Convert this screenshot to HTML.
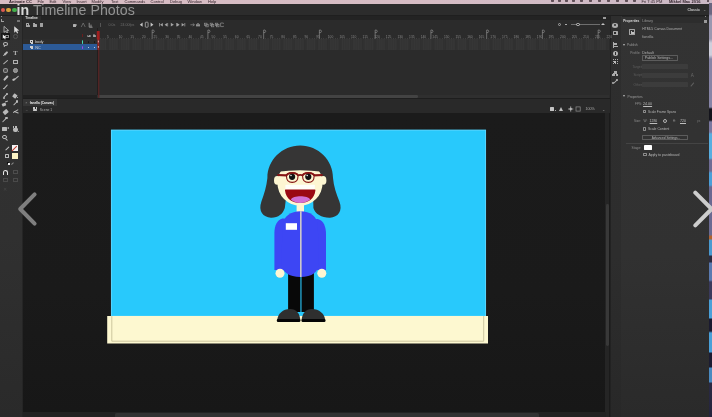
<!DOCTYPE html>
<html lang="en">
<head>
<meta charset="utf-8">
<title>in Timeline Photos</title>
<style>
html,body{margin:0;padding:0;}
body{width:712px;height:417px;overflow:hidden;background:#1b1b1b;font-family:"Liberation Sans",sans-serif;position:relative;}
#root{position:absolute;left:0;top:0;width:712px;height:417px;will-change:transform;}
.i{position:absolute;}
.t{position:absolute;white-space:nowrap;line-height:1;color:#bdbdbd;font-size:4px;}
#cap{left:16.6px;top:2.5px;font-size:14.2px;color:#939393;letter-spacing:0.04px;}
#cap b{color:#d8d8d8;}
</style>
</head>
<body>
<div id="root">
<div class="i" style="left:0.00px;top:0.00px;width:712.00px;height:3.50px;background:linear-gradient(90deg,#d8bcc3 0,#d6bcc4 60%,#cbb9c6 100%);"></div>
<div class="i" style="left:0.00px;top:3.50px;width:709.00px;height:11.10px;background:#2c2c2c;"></div>
<div class="i" style="left:0.00px;top:14.60px;width:709.00px;height:1.00px;background:#1f1f1f;"></div>
<div class="i" style="left:0.00px;top:15.60px;width:23.00px;height:401.40px;background:linear-gradient(#323232 0,#303030 55%,#2a2a2a 100%);"></div>
<div class="i" style="left:23.00px;top:15.60px;width:586.50px;height:82.20px;background:#2b2b2b;"></div>
<div class="i" style="left:23.00px;top:97.80px;width:586.50px;height:1.60px;background:#1e1e1e;"></div>
<div class="i" style="left:23.00px;top:95.40px;width:74.00px;height:2.40px;background:#212121;"></div>
<div class="i" style="left:23.00px;top:99.40px;width:586.50px;height:14.00px;background:#292929;"></div>
<div class="i" style="left:23.00px;top:113.40px;width:582.50px;height:299.20px;background:linear-gradient(#1b1b1b 0,#1a1a1a 60%,#171717 100%);"></div>
<div class="i" style="left:605.20px;top:113.40px;width:4.30px;height:303.60px;background:#252525;"></div>
<div class="i" style="left:606.00px;top:204.00px;width:2.80px;height:141.50px;background:#383838;border-radius:1.4px"></div>
<div class="i" style="left:23.00px;top:412.00px;width:582.50px;height:5.00px;background:#222;"></div>
<div class="i" style="left:115.00px;top:413.00px;width:424.00px;height:4.00px;background:#323232;border-radius:1.6px 1.6px 0 0"></div>
<div class="i" style="left:609.50px;top:15.60px;width:1.00px;height:401.40px;background:#222;"></div>
<div class="i" style="left:610.50px;top:15.60px;width:10.00px;height:401.40px;background:linear-gradient(#2e2e2e 0,#2d2d2d 60%,#282828 100%);"></div>
<div class="i" style="left:620.50px;top:15.60px;width:1.00px;height:401.40px;background:#242424;"></div>
<div class="i" style="left:621.00px;top:15.60px;width:88.00px;height:401.40px;background:linear-gradient(#333 0,#313131 60%,#2a2a2a 100%);"></div>
<div class="i" style="left:708.80px;top:3.20px;width:3.20px;height:413.80px;background:linear-gradient(#6a6680 0px,#6a6680 11px,#9a98b0 13px,#9a98b0 36px,#cfcfdc 40px,#cfcfdc 52px,#8684a6 56px,#8684a6 104px,#14141c 106px,#14141c 117px,#7a78a0 119px,#7a78a0 129px,#58aee0 131px,#58aee0 155px,#6e6c94 157px,#6e6c94 168px,#4a9fd8 170px,#4a9fd8 182px,#6a6890 184px,#6a6a92 232px,#b0622e 233px,#b0622e 236px,#4a9ad0 237px,#4a9ad0 252px,#2a2a40 253px,#2a2a40 259px,#5a7ab0 260px,#5a7ab0 277px,#3a3a5c 279px,#3a3a5c 296px,#4aa0d8 297px,#4aa0d8 315px,#1a1a30 316px,#1a1a30 328px,#4aa0d8 330px,#4aa0d8 349px,#1c1c32 350px,#1c1c32 364px,#4a8ac0 365px,#4a8ac0 379px,#2a2a44 380px,#24243c 414px);"></div>
<div class="i" id="menubar" style="left:0;top:0;width:712px;height:3.5px;overflow:hidden">
<span class="t" style="left:9px;top:0px;font-size:4.05px;color:#2b1d25;font-weight:bold;">Animate CC</span>
<span class="t" style="left:37.5px;top:0px;font-size:4.05px;color:#2b1d25;">File</span>
<span class="t" style="left:49.5px;top:0px;font-size:4.05px;color:#2b1d25;">Edit</span>
<span class="t" style="left:62.5px;top:0px;font-size:4.05px;color:#2b1d25;">View</span>
<span class="t" style="left:76.5px;top:0px;font-size:4.05px;color:#2b1d25;">Insert</span>
<span class="t" style="left:91.5px;top:0px;font-size:4.05px;color:#2b1d25;">Modify</span>
<span class="t" style="left:111px;top:0px;font-size:4.05px;color:#2b1d25;">Text</span>
<span class="t" style="left:124.5px;top:0px;font-size:4.05px;color:#2b1d25;">Commands</span>
<span class="t" style="left:150.5px;top:0px;font-size:4.05px;color:#2b1d25;">Control</span>
<span class="t" style="left:170px;top:0px;font-size:4.05px;color:#2b1d25;">Debug</span>
<span class="t" style="left:187.5px;top:0px;font-size:4.05px;color:#2b1d25;">Window</span>
<span class="t" style="left:208px;top:0px;font-size:4.05px;color:#2b1d25;">Help</span>
<span class="t" style="left:641.5px;top:0px;font-size:4.05px;color:#2b1d25;">Fri 7:45 PM</span>
<span class="t" style="left:669px;top:0px;font-size:4.05px;color:#2b1d25;font-weight:bold;">Mikkel Mac 2016</span>
<div class="i" style="left:551px;top:-0.6px;width:3.4px;height:2.8px;background:#43343c;border-radius:0.8px;opacity:.8"></div>
<div class="i" style="left:558px;top:-0.6px;width:3.4px;height:2.8px;background:#43343c;border-radius:0.8px;opacity:.8"></div>
<div class="i" style="left:565px;top:-0.6px;width:3.4px;height:2.8px;background:#43343c;border-radius:0.8px;opacity:.8"></div>
<div class="i" style="left:572px;top:-0.6px;width:3.4px;height:2.8px;background:#43343c;border-radius:0.8px;opacity:.8"></div>
<div class="i" style="left:580px;top:-0.6px;width:3.4px;height:2.8px;background:#43343c;border-radius:0.8px;opacity:.8"></div>
<div class="i" style="left:589px;top:-0.6px;width:3.4px;height:2.8px;background:#43343c;border-radius:0.8px;opacity:.8"></div>
<div class="i" style="left:598px;top:-0.6px;width:3.4px;height:2.8px;background:#43343c;border-radius:0.8px;opacity:.8"></div>
<div class="i" style="left:607px;top:-0.6px;width:3.4px;height:2.8px;background:#43343c;border-radius:0.8px;opacity:.8"></div>
<div class="i" style="left:616px;top:-0.6px;width:3.4px;height:2.8px;background:#43343c;border-radius:0.8px;opacity:.8"></div>
<div class="i" style="left:625px;top:-0.6px;width:3.4px;height:2.8px;background:#43343c;border-radius:0.8px;opacity:.8"></div>
<div class="i" style="left:633px;top:-0.6px;width:3.4px;height:2.8px;background:#43343c;border-radius:0.8px;opacity:.8"></div>
<div class="i" style="left:706.6px;top:-0.4px;width:2.6px;height:2.6px;background:#43343c;border-radius:50%"></div>
</div>
<div class="i" style="left:0.50px;top:7.60px;width:4.60px;height:4.60px;background:#de5a52;border-radius:50%"></div>
<div class="i" style="left:6.20px;top:7.60px;width:4.60px;height:4.60px;background:#d9a23c;border-radius:50%"></div>
<div class="i" style="left:12.10px;top:7.60px;width:4.60px;height:4.60px;background:#42ad4a;border-radius:50%"></div>
<span class="t" style="left:687.40px;top:9px;font-size:3.6px;color:#c6c6c6;font-weight:bold">Classic</span>
<span class="t" style="left:702.60px;top:8px;font-size:4px;color:#9a9a9a;">&#8964;</span>
<div class="i" style="left:22.40px;top:15.60px;width:0.80px;height:401.40px;background:#252525;"></div>
<div class="i" style="left:0.60px;top:16.20px;width:1.40px;height:0.70px;background:#9a9a9a;"></div>
<div class="i" style="left:1.40px;top:21.00px;width:3.00px;height:0.70px;background:#a0a0a0;"></div>
<div class="i" style="left:1.40px;top:19.20px;width:0.70px;height:1.80px;background:#a0a0a0;"></div>
<div class="i" style="left:17.40px;top:20.20px;width:2.60px;height:0.60px;background:#777;"></div>
<div class="i" style="left:17.40px;top:21.20px;width:2.60px;height:0.60px;background:#777;"></div>
<svg class="i" style="left:0.8px;top:15.6px" width="23" height="30" viewBox="0 0 23 30">
<path d="M3 10.4 L3 16.4 L4.6 15 L5.8 17.4 L6.8 16.9 L5.7 14.6 L7.6 14.4 Z" fill="none" stroke="#cfcfcf" stroke-width="0.7"/>
<path d="M13.2 10.2 L13.2 16.8 L14.9 15.2 L16.1 17.6 L17.2 17.1 L16.1 14.8 L18.2 14.6 Z" fill="#d6d6d6"/>
</svg>
<div class="i" style="left:1.40px;top:33.20px;width:8.20px;height:6.80px;background:#161616;border-radius:0.6px"></div>
<div class="i" style="left:4.60px;top:34.60px;width:4.00px;height:3.80px;border:0.6px solid #8a8a8a;box-sizing:border-box;"></div>
<svg class="i" style="left:0;top:15px" width="23" height="30" viewBox="0 0 23 30"><path d="M2.8 19.4 L2.8 23.8 L4 22.8 L4.9 24.4 L5.7 24 L4.9 22.5 L6.3 22.3 Z" fill="#f0f0f0"/></svg>
<div class="i" style="left:13.00px;top:34.10px;width:4.80px;height:4.80px;border:0.8px solid #555;box-sizing:border-box;border-radius:50%"></div>
<div class="i" style="left:2.80px;top:41.80px;width:5.20px;height:3.80px;border:0.9px solid #bababa;box-sizing:border-box;border-radius:50%"></div>
<div class="i" style="left:3.60px;top:45.20px;width:0.8px;height:2.2px;background:#bababa;transform:rotate(30deg);border-radius:0.4px;"></div>
<div class="i" style="left:4.55px;top:50.90px;width:2.1px;height:4.6px;background:#bababa;transform:rotate(45deg);border-radius:1.05px;"></div>
<div class="i" style="left:2.60px;top:54.70px;width:1.30px;height:1.30px;background:#bababa;border-radius:50%"></div>
<span class="t" style="left:13.30px;top:50px;font-size:6.4px;color:#bababa;font-weight:bold;font-family:'Liberation Serif',serif">T</span>
<div class="i" style="left:5.00px;top:58.50px;width:0.8px;height:6.4px;background:#b0b0b0;transform:rotate(50deg);border-radius:0.4px;"></div>
<div class="i" style="left:12.90px;top:60.00px;width:5.00px;height:4.20px;border:0.7px solid #b0b0b0;box-sizing:border-box;background:#3a3a3a"></div>
<div class="i" style="left:2.60px;top:68.20px;width:5.60px;height:4.60px;border:0.8px solid #9a9a9a;box-sizing:border-box;border-radius:50%;background:#4c4c4c"></div>
<div class="i" style="left:13.00px;top:67.90px;width:4.80px;height:4.80px;border:0.7px solid #a8a8a8;box-sizing:border-box;border-radius:50%;background:#8a8a8a"></div>
<div class="i" style="left:4.55px;top:75.40px;width:1.7px;height:5.8px;background:#bababa;transform:rotate(42deg);border-radius:0.85px;"></div>
<div class="i" style="left:15.50px;top:75.20px;width:1px;height:5.6px;background:#bababa;transform:rotate(50deg);border-radius:0.5px;"></div>
<div class="i" style="left:13.20px;top:78.20px;width:1.6px;height:2.8px;background:#bababa;transform:rotate(60deg);border-radius:0.8px;"></div>
<div class="i" style="left:5.00px;top:83.60px;width:1.2px;height:6px;background:#bababa;transform:rotate(42deg);border-radius:0.6px;"></div>
<div class="i" style="left:2.80px;top:87.80px;width:1.60px;height:1.60px;background:#bababa;border-radius:50%"></div>
<div class="i" style="left:4.90px;top:93.30px;width:1px;height:5px;background:#bababa;transform:rotate(45deg);border-radius:0.5px;"></div>
<div class="i" style="left:2.60px;top:96.60px;width:2.20px;height:2.20px;background:#bababa;border-radius:50%"></div>
<div class="i" style="left:6.40px;top:92.80px;width:1.80px;height:1.80px;background:#bababa;border-radius:50%"></div>
<div class="i" style="left:13.20px;top:94.40px;width:4.00px;height:3.60px;background:#bababa;border-radius:0.6px;transform:rotate(35deg)"></div>
<div class="i" style="left:17.00px;top:96.60px;width:1.30px;height:1.80px;background:#bababa;border-radius:50%"></div>
<div class="i" style="left:2.40px;top:102.80px;width:4.40px;height:3.40px;background:#bababa;border-radius:0.6px;transform:rotate(-20deg)"></div>
<div class="i" style="left:5.00px;top:101.00px;width:3.00px;height:1.20px;background:#bababa;transform:rotate(-20deg)"></div>
<div class="i" style="left:14.85px;top:100.40px;width:1.1px;height:6.4px;background:#bababa;transform:rotate(45deg);border-radius:0.55px;"></div>
<div class="i" style="left:16.20px;top:100.40px;width:2.20px;height:2.20px;background:#bababa;border-radius:50%"></div>
<div class="i" style="left:2.60px;top:109.70px;width:5.20px;height:3.60px;background:#bababa;border-radius:0.6px;transform:rotate(-40deg)"></div>
<div class="i" style="left:14.95px;top:108.30px;width:0.9px;height:6.4px;background:#bababa;transform:rotate(60deg);border-radius:0.45px;"></div>
<div class="i" style="left:15.75px;top:109.60px;width:0.9px;height:4.6px;background:#bababa;transform:rotate(110deg);border-radius:0.45px;"></div>
<div class="i" style="left:4.20px;top:116.60px;width:1.2px;height:6.2px;background:#bababa;transform:rotate(45deg);border-radius:0.6px;"></div>
<div class="i" style="left:5.00px;top:116.90px;width:2.60px;height:2.60px;background:#bababa;border-radius:50%"></div>
<div class="i" style="left:2.00px;top:127.00px;width:4.60px;height:4.00px;background:#bababa;border-radius:0.5px"></div>
<div class="i" style="left:6.6px;top:127.4px;width:0;height:0;border-right:2.2px solid #bababa;border-top:1.6px solid transparent;border-bottom:1.6px solid transparent"></div>
<div class="i" style="left:13.00px;top:127.80px;width:4.80px;height:4.00px;background:#bababa;border-radius:1.2px 1.2px 2px 2px"></div>
<div class="i" style="left:13.20px;top:126.00px;width:1.00px;height:2.40px;background:#bababa;"></div>
<div class="i" style="left:14.60px;top:125.60px;width:1.00px;height:2.60px;background:#bababa;"></div>
<div class="i" style="left:16.00px;top:126.00px;width:1.00px;height:2.40px;background:#bababa;"></div>
<div class="i" style="left:18.40px;top:131.00px;width:1.00px;height:1.00px;background:#999;"></div>
<div class="i" style="left:2.00px;top:134.60px;width:4.60px;height:4.60px;border:0.9px solid #bababa;box-sizing:border-box;border-radius:50%"></div>
<div class="i" style="left:6.30px;top:137.90px;width:1px;height:3px;background:#bababa;transform:rotate(-45deg);border-radius:0.5px;"></div>
<div class="i" style="left:6.95px;top:145.70px;width:0.9px;height:4.6px;background:#bdbdbd;transform:rotate(45deg);border-radius:0.45px;"></div>
<div class="i" style="left:11.80px;top:145.10px;width:5.80px;height:5.80px;background:#f4f4f4;"></div>
<div class="i" style="left:14.35px;top:144.70px;width:0.7px;height:6.6px;background:#c0392b;transform:rotate(45deg);border-radius:0.35px;"></div>
<div class="i" style="left:5.00px;top:154.00px;width:3.60px;height:3.60px;background:#bdbdbd;border-radius:0.6px"></div>
<div class="i" style="left:6.00px;top:155.00px;width:1.60px;height:1.60px;background:#323232;"></div>
<div class="i" style="left:11.80px;top:153.00px;width:5.80px;height:6.00px;background:#fcf3c4;"></div>
<div class="i" style="left:6.80px;top:162.10px;width:1.80px;height:1.80px;background:#111;"></div>
<div class="i" style="left:7.80px;top:163.10px;width:1.80px;height:1.80px;background:#eee;"></div>
<div class="i" style="left:11.65px;top:162.00px;width:0.7px;height:3px;background:#8a8a8a;transform:rotate(45deg);border-radius:0.35px;"></div>
<div class="i" style="left:2.60px;top:169.60px;width:5.20px;height:5.40px;border:1.3px solid #e6e6e6;box-sizing:border-box;border-bottom:none;border-radius:2.6px 2.6px 0 0"></div>
<div class="i" style="left:13.00px;top:169.80px;width:4.80px;height:4.40px;border:0.7px solid #4d4d4d;box-sizing:border-box;"></div>
<div class="i" style="left:2.80px;top:177.80px;width:4.80px;height:4.40px;border:0.7px solid #4a4a4a;box-sizing:border-box;"></div>
<div class="i" style="left:13.00px;top:177.80px;width:4.80px;height:4.40px;border:0.7px solid #4a4a4a;box-sizing:border-box;"></div>
<span class="t" style="left:3.00px;top:188px;font-size:4.6px;color:#474747;">&#10005;</span>
<div class="i" style="left:23.00px;top:15.60px;width:586.50px;height:4.20px;background:#232323;"></div>
<div class="i" style="left:23.00px;top:15.90px;width:17.50px;height:3.90px;background:#2c2c2c;"></div>
<span class="t" style="left:25.20px;top:17px;font-size:3.1px;color:#e6e6e6;font-weight:bold">Timeline</span>
<div class="i" style="left:603.00px;top:16.60px;width:3.00px;height:0.60px;background:#999;"></div>
<div class="i" style="left:603.00px;top:17.80px;width:3.00px;height:0.60px;background:#999;"></div>
<div class="i" style="left:25.80px;top:23.20px;width:3.60px;height:3.60px;border:0.8px solid #a9a9a9;box-sizing:border-box;border-radius:0.5px"></div>
<div class="i" style="left:27.20px;top:24.60px;width:2.60px;height:2.60px;background:#a9a9a9;border-radius:0.4px"></div>
<div class="i" style="left:32.80px;top:23.60px;width:4.20px;height:3.20px;background:#a9a9a9;border-radius:0.5px"></div>
<div class="i" style="left:32.80px;top:23.00px;width:1.80px;height:1.00px;background:#a9a9a9;"></div>
<div class="i" style="left:40.00px;top:23.80px;width:3.00px;height:3.20px;background:#a0a0a0;border-radius:0 0 0.6px 0.6px"></div>
<div class="i" style="left:39.60px;top:23.00px;width:3.80px;height:0.60px;background:#a0a0a0;"></div>
<div class="i" style="left:72.60px;top:23.60px;width:3.60px;height:3.00px;background:#b0b0b0;border-radius:0.5px"></div>
<div class="i" style="left:76.2px;top:24px;width:0;height:0;border-right:1.8px solid #b0b0b0;border-top:1.2px solid transparent;border-bottom:1.2px solid transparent"></div>
<svg class="i" style="left:80px;top:22px" width="16" height="7" viewBox="0 0 16 7"><path d="M1.2 5 L3.2 1 L5.2 5" fill="none" stroke="#7d7d7d" stroke-width="0.7"/><path d="M9.2 0.8 V5.2 H12.6 M11 2.6 V5.2" fill="none" stroke="#a8a8a8" stroke-width="0.8"/></svg>
<div class="i" style="left:100.00px;top:23.00px;width:0.80px;height:4.00px;background:#555;"></div>
<span class="t" style="left:108.40px;top:24px;font-size:3.6px;color:#6e6e6e;">0.0s</span>
<span class="t" style="left:120.60px;top:24px;font-size:3.6px;color:#6e6e6e;">24.00fps</span>
<div class="i" style="left:81.80px;top:34.00px;width:1.10px;height:2.60px;background:#6a1c1c;"></div>
<div class="i" style="left:86.60px;top:34.60px;width:4.00px;height:2.40px;background:#9c9c9c;border-radius:50%"></div>
<div class="i" style="left:88.00px;top:35.20px;width:1.20px;height:1.20px;background:#2b2b2b;border-radius:50%"></div>
<div class="i" style="left:92.80px;top:35.20px;width:2.80px;height:2.20px;background:#9c9c9c;border-radius:0.4px"></div>
<div class="i" style="left:93.30px;top:33.60px;width:1.80px;height:2.40px;border:0.6px solid #9c9c9c;box-sizing:border-box;border-radius:1px 1px 0 0"></div>
<div class="i" style="left:23.00px;top:39.20px;width:74.00px;height:5.20px;background:#2d2d2d;"></div>
<div class="i" style="left:23.00px;top:44.40px;width:74.00px;height:5.50px;background:#2c5a97;"></div>
<div class="i" style="left:30.00px;top:40.30px;width:2.60px;height:2.60px;border:0.6px solid #cfcfcf;box-sizing:border-box;"></div>
<div class="i" style="left:31.30px;top:41.80px;width:2.20px;height:1.90px;background:#cfcfcf;"></div>
<span class="t" style="left:35.20px;top:41px;font-size:3.8px;color:#d8d8d8;">body</span>
<div class="i" style="left:82.10px;top:40.20px;width:1.30px;height:3.60px;background:#46dcb4;border-radius:0.4px"></div>
<div class="i" style="left:88.00px;top:41.40px;width:1.20px;height:1.20px;background:#161616;border-radius:50%"></div>
<div class="i" style="left:93.70px;top:41.40px;width:1.20px;height:1.20px;background:#161616;border-radius:50%"></div>
<div class="i" style="left:30.00px;top:45.60px;width:2.60px;height:2.60px;border:0.6px solid #cfcfcf;box-sizing:border-box;"></div>
<div class="i" style="left:31.30px;top:47.10px;width:2.20px;height:1.90px;background:#cfcfcf;"></div>
<span class="t" style="left:35.20px;top:47px;font-size:3.8px;color:#d8d8d8;">NC</span>
<div class="i" style="left:82.10px;top:45.50px;width:1.30px;height:3.60px;background:#a546e8;border-radius:0.4px"></div>
<div class="i" style="left:88.00px;top:46.70px;width:1.20px;height:1.20px;background:#f0f0f0;border-radius:50%"></div>
<div class="i" style="left:93.70px;top:46.70px;width:1.20px;height:1.20px;background:#f0f0f0;border-radius:50%"></div>
<div class="i" style="left:97.00px;top:28.00px;width:0.90px;height:70.00px;background:#221e1e;"></div>
<div class="i" style="left:97.30px;top:39.40px;width:511.70px;height:10.40px;background:#363636;"></div>
<div class="i" style="left:97.30px;top:94.60px;width:512.00px;height:3.20px;background:#2f2f2f;"></div>
<div class="i" style="left:98.00px;top:95.00px;width:320.00px;height:2.80px;background:#434343;border-radius:1.3px"></div>
<div class="i" style="left:571.00px;top:24.40px;width:28.60px;height:0.60px;background:#6e6e6e;"></div>
<div class="i" style="left:576.40px;top:23.00px;width:3.20px;height:3.20px;border:0.7px solid #c9c9c9;box-sizing:border-box;border-radius:50%;background:#2b2b2b"></div>
<div class="i" style="left:565.00px;top:24.30px;width:2.00px;height:0.80px;background:#aaa;"></div>
<div class="i" style="left:601.4px;top:23.2px;width:0;height:0;border-left:2px solid transparent;border-right:2px solid transparent;border-bottom:2.4px solid #c4c4c4"></div>
<div class="i" style="left:557.60px;top:22.80px;width:3.20px;height:3.20px;border:0.7px solid #a5a5a5;box-sizing:border-box;border-radius:50%"></div>
<svg class="i" style="left:0;top:0" width="712" height="100" viewBox="0 0 712 100"><rect x="106.59" y="39.4" width="2.32" height="10.4" fill="#313131"/><rect x="118.21" y="39.4" width="2.32" height="10.4" fill="#313131"/><rect x="129.82" y="39.4" width="2.32" height="10.4" fill="#313131"/><rect x="141.44" y="39.4" width="2.32" height="10.4" fill="#313131"/><rect x="153.05" y="39.4" width="2.32" height="10.4" fill="#313131"/><rect x="164.66" y="39.4" width="2.32" height="10.4" fill="#313131"/><rect x="176.28" y="39.4" width="2.32" height="10.4" fill="#313131"/><rect x="187.89" y="39.4" width="2.32" height="10.4" fill="#313131"/><rect x="199.51" y="39.4" width="2.32" height="10.4" fill="#313131"/><rect x="211.12" y="39.4" width="2.32" height="10.4" fill="#313131"/><rect x="222.74" y="39.4" width="2.32" height="10.4" fill="#313131"/><rect x="234.35" y="39.4" width="2.32" height="10.4" fill="#313131"/><rect x="245.97" y="39.4" width="2.32" height="10.4" fill="#313131"/><rect x="257.58" y="39.4" width="2.32" height="10.4" fill="#313131"/><rect x="269.20" y="39.4" width="2.32" height="10.4" fill="#313131"/><rect x="280.81" y="39.4" width="2.32" height="10.4" fill="#313131"/><rect x="292.43" y="39.4" width="2.32" height="10.4" fill="#313131"/><rect x="304.04" y="39.4" width="2.32" height="10.4" fill="#313131"/><rect x="315.65" y="39.4" width="2.32" height="10.4" fill="#313131"/><rect x="327.27" y="39.4" width="2.32" height="10.4" fill="#313131"/><rect x="338.88" y="39.4" width="2.32" height="10.4" fill="#313131"/><rect x="350.50" y="39.4" width="2.32" height="10.4" fill="#313131"/><rect x="362.11" y="39.4" width="2.32" height="10.4" fill="#313131"/><rect x="373.73" y="39.4" width="2.32" height="10.4" fill="#313131"/><rect x="385.34" y="39.4" width="2.32" height="10.4" fill="#313131"/><rect x="396.96" y="39.4" width="2.32" height="10.4" fill="#313131"/><rect x="408.57" y="39.4" width="2.32" height="10.4" fill="#313131"/><rect x="420.19" y="39.4" width="2.32" height="10.4" fill="#313131"/><rect x="431.80" y="39.4" width="2.32" height="10.4" fill="#313131"/><rect x="443.41" y="39.4" width="2.32" height="10.4" fill="#313131"/><rect x="455.03" y="39.4" width="2.32" height="10.4" fill="#313131"/><rect x="466.64" y="39.4" width="2.32" height="10.4" fill="#313131"/><rect x="478.26" y="39.4" width="2.32" height="10.4" fill="#313131"/><rect x="489.87" y="39.4" width="2.32" height="10.4" fill="#313131"/><rect x="501.49" y="39.4" width="2.32" height="10.4" fill="#313131"/><rect x="513.10" y="39.4" width="2.32" height="10.4" fill="#313131"/><rect x="524.72" y="39.4" width="2.32" height="10.4" fill="#313131"/><rect x="536.33" y="39.4" width="2.32" height="10.4" fill="#313131"/><rect x="547.95" y="39.4" width="2.32" height="10.4" fill="#313131"/><rect x="559.56" y="39.4" width="2.32" height="10.4" fill="#313131"/><rect x="571.17" y="39.4" width="2.32" height="10.4" fill="#313131"/><rect x="582.79" y="39.4" width="2.32" height="10.4" fill="#313131"/><rect x="594.40" y="39.4" width="2.32" height="10.4" fill="#313131"/><rect x="606.02" y="39.4" width="2.32" height="10.4" fill="#313131"/><line x1="99.62" y1="39.4" x2="99.62" y2="49.8" stroke="#2d2d2d" stroke-width="0.35"/><rect x="98.16" y="38" width="0.6" height="0.7" fill="#5e5e5e"/><line x1="101.95" y1="39.4" x2="101.95" y2="49.8" stroke="#2d2d2d" stroke-width="0.35"/><rect x="100.48" y="38" width="0.6" height="0.7" fill="#5e5e5e"/><line x1="104.27" y1="39.4" x2="104.27" y2="49.8" stroke="#2d2d2d" stroke-width="0.35"/><rect x="102.81" y="38" width="0.6" height="0.7" fill="#5e5e5e"/><line x1="106.59" y1="39.4" x2="106.59" y2="49.8" stroke="#2d2d2d" stroke-width="0.35"/><rect x="105.13" y="38" width="0.6" height="0.7" fill="#5e5e5e"/><line x1="108.91" y1="39.4" x2="108.91" y2="49.8" stroke="#2d2d2d" stroke-width="0.35"/><rect x="107.45" y="38" width="0.6" height="0.7" fill="#5e5e5e"/><line x1="111.24" y1="39.4" x2="111.24" y2="49.8" stroke="#2d2d2d" stroke-width="0.35"/><rect x="109.78" y="38" width="0.6" height="0.7" fill="#5e5e5e"/><line x1="113.56" y1="39.4" x2="113.56" y2="49.8" stroke="#2d2d2d" stroke-width="0.35"/><rect x="112.10" y="38" width="0.6" height="0.7" fill="#5e5e5e"/><line x1="115.88" y1="39.4" x2="115.88" y2="49.8" stroke="#2d2d2d" stroke-width="0.35"/><rect x="114.42" y="38" width="0.6" height="0.7" fill="#5e5e5e"/><line x1="118.21" y1="39.4" x2="118.21" y2="49.8" stroke="#2d2d2d" stroke-width="0.35"/><rect x="116.74" y="38" width="0.6" height="0.7" fill="#5e5e5e"/><line x1="120.53" y1="39.4" x2="120.53" y2="49.8" stroke="#2d2d2d" stroke-width="0.35"/><rect x="119.07" y="38" width="0.6" height="0.7" fill="#5e5e5e"/><line x1="122.85" y1="39.4" x2="122.85" y2="49.8" stroke="#2d2d2d" stroke-width="0.35"/><rect x="121.39" y="38" width="0.6" height="0.7" fill="#5e5e5e"/><line x1="125.17" y1="39.4" x2="125.17" y2="49.8" stroke="#2d2d2d" stroke-width="0.35"/><rect x="123.71" y="38" width="0.6" height="0.7" fill="#5e5e5e"/><line x1="127.50" y1="39.4" x2="127.50" y2="49.8" stroke="#2d2d2d" stroke-width="0.35"/><rect x="126.04" y="38" width="0.6" height="0.7" fill="#5e5e5e"/><line x1="129.82" y1="39.4" x2="129.82" y2="49.8" stroke="#2d2d2d" stroke-width="0.35"/><rect x="128.36" y="38" width="0.6" height="0.7" fill="#5e5e5e"/><line x1="132.14" y1="39.4" x2="132.14" y2="49.8" stroke="#2d2d2d" stroke-width="0.35"/><rect x="130.68" y="38" width="0.6" height="0.7" fill="#5e5e5e"/><line x1="134.47" y1="39.4" x2="134.47" y2="49.8" stroke="#2d2d2d" stroke-width="0.35"/><rect x="133.01" y="38" width="0.6" height="0.7" fill="#5e5e5e"/><line x1="136.79" y1="39.4" x2="136.79" y2="49.8" stroke="#2d2d2d" stroke-width="0.35"/><rect x="135.33" y="38" width="0.6" height="0.7" fill="#5e5e5e"/><line x1="139.11" y1="39.4" x2="139.11" y2="49.8" stroke="#2d2d2d" stroke-width="0.35"/><rect x="137.65" y="38" width="0.6" height="0.7" fill="#5e5e5e"/><line x1="141.44" y1="39.4" x2="141.44" y2="49.8" stroke="#2d2d2d" stroke-width="0.35"/><rect x="139.97" y="38" width="0.6" height="0.7" fill="#5e5e5e"/><line x1="143.76" y1="39.4" x2="143.76" y2="49.8" stroke="#2d2d2d" stroke-width="0.35"/><rect x="142.30" y="38" width="0.6" height="0.7" fill="#5e5e5e"/><line x1="146.08" y1="39.4" x2="146.08" y2="49.8" stroke="#2d2d2d" stroke-width="0.35"/><rect x="144.62" y="38" width="0.6" height="0.7" fill="#5e5e5e"/><line x1="148.40" y1="39.4" x2="148.40" y2="49.8" stroke="#2d2d2d" stroke-width="0.35"/><rect x="146.94" y="38" width="0.6" height="0.7" fill="#5e5e5e"/><line x1="150.73" y1="39.4" x2="150.73" y2="49.8" stroke="#2d2d2d" stroke-width="0.35"/><rect x="149.27" y="38" width="0.6" height="0.7" fill="#5e5e5e"/><line x1="153.05" y1="39.4" x2="153.05" y2="49.8" stroke="#2d2d2d" stroke-width="0.35"/><rect x="151.59" y="38" width="0.6" height="0.7" fill="#5e5e5e"/><line x1="155.37" y1="39.4" x2="155.37" y2="49.8" stroke="#2d2d2d" stroke-width="0.35"/><rect x="153.91" y="38" width="0.6" height="0.7" fill="#5e5e5e"/><line x1="157.70" y1="39.4" x2="157.70" y2="49.8" stroke="#2d2d2d" stroke-width="0.35"/><rect x="156.23" y="38" width="0.6" height="0.7" fill="#5e5e5e"/><line x1="160.02" y1="39.4" x2="160.02" y2="49.8" stroke="#2d2d2d" stroke-width="0.35"/><rect x="158.56" y="38" width="0.6" height="0.7" fill="#5e5e5e"/><line x1="162.34" y1="39.4" x2="162.34" y2="49.8" stroke="#2d2d2d" stroke-width="0.35"/><rect x="160.88" y="38" width="0.6" height="0.7" fill="#5e5e5e"/><line x1="164.66" y1="39.4" x2="164.66" y2="49.8" stroke="#2d2d2d" stroke-width="0.35"/><rect x="163.20" y="38" width="0.6" height="0.7" fill="#5e5e5e"/><line x1="166.99" y1="39.4" x2="166.99" y2="49.8" stroke="#2d2d2d" stroke-width="0.35"/><rect x="165.53" y="38" width="0.6" height="0.7" fill="#5e5e5e"/><line x1="169.31" y1="39.4" x2="169.31" y2="49.8" stroke="#2d2d2d" stroke-width="0.35"/><rect x="167.85" y="38" width="0.6" height="0.7" fill="#5e5e5e"/><line x1="171.63" y1="39.4" x2="171.63" y2="49.8" stroke="#2d2d2d" stroke-width="0.35"/><rect x="170.17" y="38" width="0.6" height="0.7" fill="#5e5e5e"/><line x1="173.96" y1="39.4" x2="173.96" y2="49.8" stroke="#2d2d2d" stroke-width="0.35"/><rect x="172.49" y="38" width="0.6" height="0.7" fill="#5e5e5e"/><line x1="176.28" y1="39.4" x2="176.28" y2="49.8" stroke="#2d2d2d" stroke-width="0.35"/><rect x="174.82" y="38" width="0.6" height="0.7" fill="#5e5e5e"/><line x1="178.60" y1="39.4" x2="178.60" y2="49.8" stroke="#2d2d2d" stroke-width="0.35"/><rect x="177.14" y="38" width="0.6" height="0.7" fill="#5e5e5e"/><line x1="180.93" y1="39.4" x2="180.93" y2="49.8" stroke="#2d2d2d" stroke-width="0.35"/><rect x="179.46" y="38" width="0.6" height="0.7" fill="#5e5e5e"/><line x1="183.25" y1="39.4" x2="183.25" y2="49.8" stroke="#2d2d2d" stroke-width="0.35"/><rect x="181.79" y="38" width="0.6" height="0.7" fill="#5e5e5e"/><line x1="185.57" y1="39.4" x2="185.57" y2="49.8" stroke="#2d2d2d" stroke-width="0.35"/><rect x="184.11" y="38" width="0.6" height="0.7" fill="#5e5e5e"/><line x1="187.89" y1="39.4" x2="187.89" y2="49.8" stroke="#2d2d2d" stroke-width="0.35"/><rect x="186.43" y="38" width="0.6" height="0.7" fill="#5e5e5e"/><line x1="190.22" y1="39.4" x2="190.22" y2="49.8" stroke="#2d2d2d" stroke-width="0.35"/><rect x="188.76" y="38" width="0.6" height="0.7" fill="#5e5e5e"/><line x1="192.54" y1="39.4" x2="192.54" y2="49.8" stroke="#2d2d2d" stroke-width="0.35"/><rect x="191.08" y="38" width="0.6" height="0.7" fill="#5e5e5e"/><line x1="194.86" y1="39.4" x2="194.86" y2="49.8" stroke="#2d2d2d" stroke-width="0.35"/><rect x="193.40" y="38" width="0.6" height="0.7" fill="#5e5e5e"/><line x1="197.19" y1="39.4" x2="197.19" y2="49.8" stroke="#2d2d2d" stroke-width="0.35"/><rect x="195.72" y="38" width="0.6" height="0.7" fill="#5e5e5e"/><line x1="199.51" y1="39.4" x2="199.51" y2="49.8" stroke="#2d2d2d" stroke-width="0.35"/><rect x="198.05" y="38" width="0.6" height="0.7" fill="#5e5e5e"/><line x1="201.83" y1="39.4" x2="201.83" y2="49.8" stroke="#2d2d2d" stroke-width="0.35"/><rect x="200.37" y="38" width="0.6" height="0.7" fill="#5e5e5e"/><line x1="204.15" y1="39.4" x2="204.15" y2="49.8" stroke="#2d2d2d" stroke-width="0.35"/><rect x="202.69" y="38" width="0.6" height="0.7" fill="#5e5e5e"/><line x1="206.48" y1="39.4" x2="206.48" y2="49.8" stroke="#2d2d2d" stroke-width="0.35"/><rect x="205.02" y="38" width="0.6" height="0.7" fill="#5e5e5e"/><line x1="208.80" y1="39.4" x2="208.80" y2="49.8" stroke="#2d2d2d" stroke-width="0.35"/><rect x="207.34" y="38" width="0.6" height="0.7" fill="#5e5e5e"/><line x1="211.12" y1="39.4" x2="211.12" y2="49.8" stroke="#2d2d2d" stroke-width="0.35"/><rect x="209.66" y="38" width="0.6" height="0.7" fill="#5e5e5e"/><line x1="213.45" y1="39.4" x2="213.45" y2="49.8" stroke="#2d2d2d" stroke-width="0.35"/><rect x="211.98" y="38" width="0.6" height="0.7" fill="#5e5e5e"/><line x1="215.77" y1="39.4" x2="215.77" y2="49.8" stroke="#2d2d2d" stroke-width="0.35"/><rect x="214.31" y="38" width="0.6" height="0.7" fill="#5e5e5e"/><line x1="218.09" y1="39.4" x2="218.09" y2="49.8" stroke="#2d2d2d" stroke-width="0.35"/><rect x="216.63" y="38" width="0.6" height="0.7" fill="#5e5e5e"/><line x1="220.41" y1="39.4" x2="220.41" y2="49.8" stroke="#2d2d2d" stroke-width="0.35"/><rect x="218.95" y="38" width="0.6" height="0.7" fill="#5e5e5e"/><line x1="222.74" y1="39.4" x2="222.74" y2="49.8" stroke="#2d2d2d" stroke-width="0.35"/><rect x="221.28" y="38" width="0.6" height="0.7" fill="#5e5e5e"/><line x1="225.06" y1="39.4" x2="225.06" y2="49.8" stroke="#2d2d2d" stroke-width="0.35"/><rect x="223.60" y="38" width="0.6" height="0.7" fill="#5e5e5e"/><line x1="227.38" y1="39.4" x2="227.38" y2="49.8" stroke="#2d2d2d" stroke-width="0.35"/><rect x="225.92" y="38" width="0.6" height="0.7" fill="#5e5e5e"/><line x1="229.71" y1="39.4" x2="229.71" y2="49.8" stroke="#2d2d2d" stroke-width="0.35"/><rect x="228.24" y="38" width="0.6" height="0.7" fill="#5e5e5e"/><line x1="232.03" y1="39.4" x2="232.03" y2="49.8" stroke="#2d2d2d" stroke-width="0.35"/><rect x="230.57" y="38" width="0.6" height="0.7" fill="#5e5e5e"/><line x1="234.35" y1="39.4" x2="234.35" y2="49.8" stroke="#2d2d2d" stroke-width="0.35"/><rect x="232.89" y="38" width="0.6" height="0.7" fill="#5e5e5e"/><line x1="236.68" y1="39.4" x2="236.68" y2="49.8" stroke="#2d2d2d" stroke-width="0.35"/><rect x="235.21" y="38" width="0.6" height="0.7" fill="#5e5e5e"/><line x1="239.00" y1="39.4" x2="239.00" y2="49.8" stroke="#2d2d2d" stroke-width="0.35"/><rect x="237.54" y="38" width="0.6" height="0.7" fill="#5e5e5e"/><line x1="241.32" y1="39.4" x2="241.32" y2="49.8" stroke="#2d2d2d" stroke-width="0.35"/><rect x="239.86" y="38" width="0.6" height="0.7" fill="#5e5e5e"/><line x1="243.64" y1="39.4" x2="243.64" y2="49.8" stroke="#2d2d2d" stroke-width="0.35"/><rect x="242.18" y="38" width="0.6" height="0.7" fill="#5e5e5e"/><line x1="245.97" y1="39.4" x2="245.97" y2="49.8" stroke="#2d2d2d" stroke-width="0.35"/><rect x="244.51" y="38" width="0.6" height="0.7" fill="#5e5e5e"/><line x1="248.29" y1="39.4" x2="248.29" y2="49.8" stroke="#2d2d2d" stroke-width="0.35"/><rect x="246.83" y="38" width="0.6" height="0.7" fill="#5e5e5e"/><line x1="250.61" y1="39.4" x2="250.61" y2="49.8" stroke="#2d2d2d" stroke-width="0.35"/><rect x="249.15" y="38" width="0.6" height="0.7" fill="#5e5e5e"/><line x1="252.94" y1="39.4" x2="252.94" y2="49.8" stroke="#2d2d2d" stroke-width="0.35"/><rect x="251.47" y="38" width="0.6" height="0.7" fill="#5e5e5e"/><line x1="255.26" y1="39.4" x2="255.26" y2="49.8" stroke="#2d2d2d" stroke-width="0.35"/><rect x="253.80" y="38" width="0.6" height="0.7" fill="#5e5e5e"/><line x1="257.58" y1="39.4" x2="257.58" y2="49.8" stroke="#2d2d2d" stroke-width="0.35"/><rect x="256.12" y="38" width="0.6" height="0.7" fill="#5e5e5e"/><line x1="259.90" y1="39.4" x2="259.90" y2="49.8" stroke="#2d2d2d" stroke-width="0.35"/><rect x="258.44" y="38" width="0.6" height="0.7" fill="#5e5e5e"/><line x1="262.23" y1="39.4" x2="262.23" y2="49.8" stroke="#2d2d2d" stroke-width="0.35"/><rect x="260.77" y="38" width="0.6" height="0.7" fill="#5e5e5e"/><line x1="264.55" y1="39.4" x2="264.55" y2="49.8" stroke="#2d2d2d" stroke-width="0.35"/><rect x="263.09" y="38" width="0.6" height="0.7" fill="#5e5e5e"/><line x1="266.87" y1="39.4" x2="266.87" y2="49.8" stroke="#2d2d2d" stroke-width="0.35"/><rect x="265.41" y="38" width="0.6" height="0.7" fill="#5e5e5e"/><line x1="269.20" y1="39.4" x2="269.20" y2="49.8" stroke="#2d2d2d" stroke-width="0.35"/><rect x="267.73" y="38" width="0.6" height="0.7" fill="#5e5e5e"/><line x1="271.52" y1="39.4" x2="271.52" y2="49.8" stroke="#2d2d2d" stroke-width="0.35"/><rect x="270.06" y="38" width="0.6" height="0.7" fill="#5e5e5e"/><line x1="273.84" y1="39.4" x2="273.84" y2="49.8" stroke="#2d2d2d" stroke-width="0.35"/><rect x="272.38" y="38" width="0.6" height="0.7" fill="#5e5e5e"/><line x1="276.16" y1="39.4" x2="276.16" y2="49.8" stroke="#2d2d2d" stroke-width="0.35"/><rect x="274.70" y="38" width="0.6" height="0.7" fill="#5e5e5e"/><line x1="278.49" y1="39.4" x2="278.49" y2="49.8" stroke="#2d2d2d" stroke-width="0.35"/><rect x="277.03" y="38" width="0.6" height="0.7" fill="#5e5e5e"/><line x1="280.81" y1="39.4" x2="280.81" y2="49.8" stroke="#2d2d2d" stroke-width="0.35"/><rect x="279.35" y="38" width="0.6" height="0.7" fill="#5e5e5e"/><line x1="283.13" y1="39.4" x2="283.13" y2="49.8" stroke="#2d2d2d" stroke-width="0.35"/><rect x="281.67" y="38" width="0.6" height="0.7" fill="#5e5e5e"/><line x1="285.46" y1="39.4" x2="285.46" y2="49.8" stroke="#2d2d2d" stroke-width="0.35"/><rect x="283.99" y="38" width="0.6" height="0.7" fill="#5e5e5e"/><line x1="287.78" y1="39.4" x2="287.78" y2="49.8" stroke="#2d2d2d" stroke-width="0.35"/><rect x="286.32" y="38" width="0.6" height="0.7" fill="#5e5e5e"/><line x1="290.10" y1="39.4" x2="290.10" y2="49.8" stroke="#2d2d2d" stroke-width="0.35"/><rect x="288.64" y="38" width="0.6" height="0.7" fill="#5e5e5e"/><line x1="292.43" y1="39.4" x2="292.43" y2="49.8" stroke="#2d2d2d" stroke-width="0.35"/><rect x="290.96" y="38" width="0.6" height="0.7" fill="#5e5e5e"/><line x1="294.75" y1="39.4" x2="294.75" y2="49.8" stroke="#2d2d2d" stroke-width="0.35"/><rect x="293.29" y="38" width="0.6" height="0.7" fill="#5e5e5e"/><line x1="297.07" y1="39.4" x2="297.07" y2="49.8" stroke="#2d2d2d" stroke-width="0.35"/><rect x="295.61" y="38" width="0.6" height="0.7" fill="#5e5e5e"/><line x1="299.39" y1="39.4" x2="299.39" y2="49.8" stroke="#2d2d2d" stroke-width="0.35"/><rect x="297.93" y="38" width="0.6" height="0.7" fill="#5e5e5e"/><line x1="301.72" y1="39.4" x2="301.72" y2="49.8" stroke="#2d2d2d" stroke-width="0.35"/><rect x="300.26" y="38" width="0.6" height="0.7" fill="#5e5e5e"/><line x1="304.04" y1="39.4" x2="304.04" y2="49.8" stroke="#2d2d2d" stroke-width="0.35"/><rect x="302.58" y="38" width="0.6" height="0.7" fill="#5e5e5e"/><line x1="306.36" y1="39.4" x2="306.36" y2="49.8" stroke="#2d2d2d" stroke-width="0.35"/><rect x="304.90" y="38" width="0.6" height="0.7" fill="#5e5e5e"/><line x1="308.69" y1="39.4" x2="308.69" y2="49.8" stroke="#2d2d2d" stroke-width="0.35"/><rect x="307.22" y="38" width="0.6" height="0.7" fill="#5e5e5e"/><line x1="311.01" y1="39.4" x2="311.01" y2="49.8" stroke="#2d2d2d" stroke-width="0.35"/><rect x="309.55" y="38" width="0.6" height="0.7" fill="#5e5e5e"/><line x1="313.33" y1="39.4" x2="313.33" y2="49.8" stroke="#2d2d2d" stroke-width="0.35"/><rect x="311.87" y="38" width="0.6" height="0.7" fill="#5e5e5e"/><line x1="315.65" y1="39.4" x2="315.65" y2="49.8" stroke="#2d2d2d" stroke-width="0.35"/><rect x="314.19" y="38" width="0.6" height="0.7" fill="#5e5e5e"/><line x1="317.98" y1="39.4" x2="317.98" y2="49.8" stroke="#2d2d2d" stroke-width="0.35"/><rect x="316.52" y="38" width="0.6" height="0.7" fill="#5e5e5e"/><line x1="320.30" y1="39.4" x2="320.30" y2="49.8" stroke="#2d2d2d" stroke-width="0.35"/><rect x="318.84" y="38" width="0.6" height="0.7" fill="#5e5e5e"/><line x1="322.62" y1="39.4" x2="322.62" y2="49.8" stroke="#2d2d2d" stroke-width="0.35"/><rect x="321.16" y="38" width="0.6" height="0.7" fill="#5e5e5e"/><line x1="324.95" y1="39.4" x2="324.95" y2="49.8" stroke="#2d2d2d" stroke-width="0.35"/><rect x="323.48" y="38" width="0.6" height="0.7" fill="#5e5e5e"/><line x1="327.27" y1="39.4" x2="327.27" y2="49.8" stroke="#2d2d2d" stroke-width="0.35"/><rect x="325.81" y="38" width="0.6" height="0.7" fill="#5e5e5e"/><line x1="329.59" y1="39.4" x2="329.59" y2="49.8" stroke="#2d2d2d" stroke-width="0.35"/><rect x="328.13" y="38" width="0.6" height="0.7" fill="#5e5e5e"/><line x1="331.91" y1="39.4" x2="331.91" y2="49.8" stroke="#2d2d2d" stroke-width="0.35"/><rect x="330.45" y="38" width="0.6" height="0.7" fill="#5e5e5e"/><line x1="334.24" y1="39.4" x2="334.24" y2="49.8" stroke="#2d2d2d" stroke-width="0.35"/><rect x="332.78" y="38" width="0.6" height="0.7" fill="#5e5e5e"/><line x1="336.56" y1="39.4" x2="336.56" y2="49.8" stroke="#2d2d2d" stroke-width="0.35"/><rect x="335.10" y="38" width="0.6" height="0.7" fill="#5e5e5e"/><line x1="338.88" y1="39.4" x2="338.88" y2="49.8" stroke="#2d2d2d" stroke-width="0.35"/><rect x="337.42" y="38" width="0.6" height="0.7" fill="#5e5e5e"/><line x1="341.21" y1="39.4" x2="341.21" y2="49.8" stroke="#2d2d2d" stroke-width="0.35"/><rect x="339.74" y="38" width="0.6" height="0.7" fill="#5e5e5e"/><line x1="343.53" y1="39.4" x2="343.53" y2="49.8" stroke="#2d2d2d" stroke-width="0.35"/><rect x="342.07" y="38" width="0.6" height="0.7" fill="#5e5e5e"/><line x1="345.85" y1="39.4" x2="345.85" y2="49.8" stroke="#2d2d2d" stroke-width="0.35"/><rect x="344.39" y="38" width="0.6" height="0.7" fill="#5e5e5e"/><line x1="348.17" y1="39.4" x2="348.17" y2="49.8" stroke="#2d2d2d" stroke-width="0.35"/><rect x="346.71" y="38" width="0.6" height="0.7" fill="#5e5e5e"/><line x1="350.50" y1="39.4" x2="350.50" y2="49.8" stroke="#2d2d2d" stroke-width="0.35"/><rect x="349.04" y="38" width="0.6" height="0.7" fill="#5e5e5e"/><line x1="352.82" y1="39.4" x2="352.82" y2="49.8" stroke="#2d2d2d" stroke-width="0.35"/><rect x="351.36" y="38" width="0.6" height="0.7" fill="#5e5e5e"/><line x1="355.14" y1="39.4" x2="355.14" y2="49.8" stroke="#2d2d2d" stroke-width="0.35"/><rect x="353.68" y="38" width="0.6" height="0.7" fill="#5e5e5e"/><line x1="357.47" y1="39.4" x2="357.47" y2="49.8" stroke="#2d2d2d" stroke-width="0.35"/><rect x="356.01" y="38" width="0.6" height="0.7" fill="#5e5e5e"/><line x1="359.79" y1="39.4" x2="359.79" y2="49.8" stroke="#2d2d2d" stroke-width="0.35"/><rect x="358.33" y="38" width="0.6" height="0.7" fill="#5e5e5e"/><line x1="362.11" y1="39.4" x2="362.11" y2="49.8" stroke="#2d2d2d" stroke-width="0.35"/><rect x="360.65" y="38" width="0.6" height="0.7" fill="#5e5e5e"/><line x1="364.44" y1="39.4" x2="364.44" y2="49.8" stroke="#2d2d2d" stroke-width="0.35"/><rect x="362.97" y="38" width="0.6" height="0.7" fill="#5e5e5e"/><line x1="366.76" y1="39.4" x2="366.76" y2="49.8" stroke="#2d2d2d" stroke-width="0.35"/><rect x="365.30" y="38" width="0.6" height="0.7" fill="#5e5e5e"/><line x1="369.08" y1="39.4" x2="369.08" y2="49.8" stroke="#2d2d2d" stroke-width="0.35"/><rect x="367.62" y="38" width="0.6" height="0.7" fill="#5e5e5e"/><line x1="371.40" y1="39.4" x2="371.40" y2="49.8" stroke="#2d2d2d" stroke-width="0.35"/><rect x="369.94" y="38" width="0.6" height="0.7" fill="#5e5e5e"/><line x1="373.73" y1="39.4" x2="373.73" y2="49.8" stroke="#2d2d2d" stroke-width="0.35"/><rect x="372.27" y="38" width="0.6" height="0.7" fill="#5e5e5e"/><line x1="376.05" y1="39.4" x2="376.05" y2="49.8" stroke="#2d2d2d" stroke-width="0.35"/><rect x="374.59" y="38" width="0.6" height="0.7" fill="#5e5e5e"/><line x1="378.37" y1="39.4" x2="378.37" y2="49.8" stroke="#2d2d2d" stroke-width="0.35"/><rect x="376.91" y="38" width="0.6" height="0.7" fill="#5e5e5e"/><line x1="380.70" y1="39.4" x2="380.70" y2="49.8" stroke="#2d2d2d" stroke-width="0.35"/><rect x="379.23" y="38" width="0.6" height="0.7" fill="#5e5e5e"/><line x1="383.02" y1="39.4" x2="383.02" y2="49.8" stroke="#2d2d2d" stroke-width="0.35"/><rect x="381.56" y="38" width="0.6" height="0.7" fill="#5e5e5e"/><line x1="385.34" y1="39.4" x2="385.34" y2="49.8" stroke="#2d2d2d" stroke-width="0.35"/><rect x="383.88" y="38" width="0.6" height="0.7" fill="#5e5e5e"/><line x1="387.66" y1="39.4" x2="387.66" y2="49.8" stroke="#2d2d2d" stroke-width="0.35"/><rect x="386.20" y="38" width="0.6" height="0.7" fill="#5e5e5e"/><line x1="389.99" y1="39.4" x2="389.99" y2="49.8" stroke="#2d2d2d" stroke-width="0.35"/><rect x="388.53" y="38" width="0.6" height="0.7" fill="#5e5e5e"/><line x1="392.31" y1="39.4" x2="392.31" y2="49.8" stroke="#2d2d2d" stroke-width="0.35"/><rect x="390.85" y="38" width="0.6" height="0.7" fill="#5e5e5e"/><line x1="394.63" y1="39.4" x2="394.63" y2="49.8" stroke="#2d2d2d" stroke-width="0.35"/><rect x="393.17" y="38" width="0.6" height="0.7" fill="#5e5e5e"/><line x1="396.96" y1="39.4" x2="396.96" y2="49.8" stroke="#2d2d2d" stroke-width="0.35"/><rect x="395.49" y="38" width="0.6" height="0.7" fill="#5e5e5e"/><line x1="399.28" y1="39.4" x2="399.28" y2="49.8" stroke="#2d2d2d" stroke-width="0.35"/><rect x="397.82" y="38" width="0.6" height="0.7" fill="#5e5e5e"/><line x1="401.60" y1="39.4" x2="401.60" y2="49.8" stroke="#2d2d2d" stroke-width="0.35"/><rect x="400.14" y="38" width="0.6" height="0.7" fill="#5e5e5e"/><line x1="403.93" y1="39.4" x2="403.93" y2="49.8" stroke="#2d2d2d" stroke-width="0.35"/><rect x="402.46" y="38" width="0.6" height="0.7" fill="#5e5e5e"/><line x1="406.25" y1="39.4" x2="406.25" y2="49.8" stroke="#2d2d2d" stroke-width="0.35"/><rect x="404.79" y="38" width="0.6" height="0.7" fill="#5e5e5e"/><line x1="408.57" y1="39.4" x2="408.57" y2="49.8" stroke="#2d2d2d" stroke-width="0.35"/><rect x="407.11" y="38" width="0.6" height="0.7" fill="#5e5e5e"/><line x1="410.89" y1="39.4" x2="410.89" y2="49.8" stroke="#2d2d2d" stroke-width="0.35"/><rect x="409.43" y="38" width="0.6" height="0.7" fill="#5e5e5e"/><line x1="413.22" y1="39.4" x2="413.22" y2="49.8" stroke="#2d2d2d" stroke-width="0.35"/><rect x="411.76" y="38" width="0.6" height="0.7" fill="#5e5e5e"/><line x1="415.54" y1="39.4" x2="415.54" y2="49.8" stroke="#2d2d2d" stroke-width="0.35"/><rect x="414.08" y="38" width="0.6" height="0.7" fill="#5e5e5e"/><line x1="417.86" y1="39.4" x2="417.86" y2="49.8" stroke="#2d2d2d" stroke-width="0.35"/><rect x="416.40" y="38" width="0.6" height="0.7" fill="#5e5e5e"/><line x1="420.19" y1="39.4" x2="420.19" y2="49.8" stroke="#2d2d2d" stroke-width="0.35"/><rect x="418.72" y="38" width="0.6" height="0.7" fill="#5e5e5e"/><line x1="422.51" y1="39.4" x2="422.51" y2="49.8" stroke="#2d2d2d" stroke-width="0.35"/><rect x="421.05" y="38" width="0.6" height="0.7" fill="#5e5e5e"/><line x1="424.83" y1="39.4" x2="424.83" y2="49.8" stroke="#2d2d2d" stroke-width="0.35"/><rect x="423.37" y="38" width="0.6" height="0.7" fill="#5e5e5e"/><line x1="427.15" y1="39.4" x2="427.15" y2="49.8" stroke="#2d2d2d" stroke-width="0.35"/><rect x="425.69" y="38" width="0.6" height="0.7" fill="#5e5e5e"/><line x1="429.48" y1="39.4" x2="429.48" y2="49.8" stroke="#2d2d2d" stroke-width="0.35"/><rect x="428.02" y="38" width="0.6" height="0.7" fill="#5e5e5e"/><line x1="431.80" y1="39.4" x2="431.80" y2="49.8" stroke="#2d2d2d" stroke-width="0.35"/><rect x="430.34" y="38" width="0.6" height="0.7" fill="#5e5e5e"/><line x1="434.12" y1="39.4" x2="434.12" y2="49.8" stroke="#2d2d2d" stroke-width="0.35"/><rect x="432.66" y="38" width="0.6" height="0.7" fill="#5e5e5e"/><line x1="436.45" y1="39.4" x2="436.45" y2="49.8" stroke="#2d2d2d" stroke-width="0.35"/><rect x="434.98" y="38" width="0.6" height="0.7" fill="#5e5e5e"/><line x1="438.77" y1="39.4" x2="438.77" y2="49.8" stroke="#2d2d2d" stroke-width="0.35"/><rect x="437.31" y="38" width="0.6" height="0.7" fill="#5e5e5e"/><line x1="441.09" y1="39.4" x2="441.09" y2="49.8" stroke="#2d2d2d" stroke-width="0.35"/><rect x="439.63" y="38" width="0.6" height="0.7" fill="#5e5e5e"/><line x1="443.41" y1="39.4" x2="443.41" y2="49.8" stroke="#2d2d2d" stroke-width="0.35"/><rect x="441.95" y="38" width="0.6" height="0.7" fill="#5e5e5e"/><line x1="445.74" y1="39.4" x2="445.74" y2="49.8" stroke="#2d2d2d" stroke-width="0.35"/><rect x="444.28" y="38" width="0.6" height="0.7" fill="#5e5e5e"/><line x1="448.06" y1="39.4" x2="448.06" y2="49.8" stroke="#2d2d2d" stroke-width="0.35"/><rect x="446.60" y="38" width="0.6" height="0.7" fill="#5e5e5e"/><line x1="450.38" y1="39.4" x2="450.38" y2="49.8" stroke="#2d2d2d" stroke-width="0.35"/><rect x="448.92" y="38" width="0.6" height="0.7" fill="#5e5e5e"/><line x1="452.71" y1="39.4" x2="452.71" y2="49.8" stroke="#2d2d2d" stroke-width="0.35"/><rect x="451.24" y="38" width="0.6" height="0.7" fill="#5e5e5e"/><line x1="455.03" y1="39.4" x2="455.03" y2="49.8" stroke="#2d2d2d" stroke-width="0.35"/><rect x="453.57" y="38" width="0.6" height="0.7" fill="#5e5e5e"/><line x1="457.35" y1="39.4" x2="457.35" y2="49.8" stroke="#2d2d2d" stroke-width="0.35"/><rect x="455.89" y="38" width="0.6" height="0.7" fill="#5e5e5e"/><line x1="459.68" y1="39.4" x2="459.68" y2="49.8" stroke="#2d2d2d" stroke-width="0.35"/><rect x="458.21" y="38" width="0.6" height="0.7" fill="#5e5e5e"/><line x1="462.00" y1="39.4" x2="462.00" y2="49.8" stroke="#2d2d2d" stroke-width="0.35"/><rect x="460.54" y="38" width="0.6" height="0.7" fill="#5e5e5e"/><line x1="464.32" y1="39.4" x2="464.32" y2="49.8" stroke="#2d2d2d" stroke-width="0.35"/><rect x="462.86" y="38" width="0.6" height="0.7" fill="#5e5e5e"/><line x1="466.64" y1="39.4" x2="466.64" y2="49.8" stroke="#2d2d2d" stroke-width="0.35"/><rect x="465.18" y="38" width="0.6" height="0.7" fill="#5e5e5e"/><line x1="468.97" y1="39.4" x2="468.97" y2="49.8" stroke="#2d2d2d" stroke-width="0.35"/><rect x="467.51" y="38" width="0.6" height="0.7" fill="#5e5e5e"/><line x1="471.29" y1="39.4" x2="471.29" y2="49.8" stroke="#2d2d2d" stroke-width="0.35"/><rect x="469.83" y="38" width="0.6" height="0.7" fill="#5e5e5e"/><line x1="473.61" y1="39.4" x2="473.61" y2="49.8" stroke="#2d2d2d" stroke-width="0.35"/><rect x="472.15" y="38" width="0.6" height="0.7" fill="#5e5e5e"/><line x1="475.94" y1="39.4" x2="475.94" y2="49.8" stroke="#2d2d2d" stroke-width="0.35"/><rect x="474.47" y="38" width="0.6" height="0.7" fill="#5e5e5e"/><line x1="478.26" y1="39.4" x2="478.26" y2="49.8" stroke="#2d2d2d" stroke-width="0.35"/><rect x="476.80" y="38" width="0.6" height="0.7" fill="#5e5e5e"/><line x1="480.58" y1="39.4" x2="480.58" y2="49.8" stroke="#2d2d2d" stroke-width="0.35"/><rect x="479.12" y="38" width="0.6" height="0.7" fill="#5e5e5e"/><line x1="482.90" y1="39.4" x2="482.90" y2="49.8" stroke="#2d2d2d" stroke-width="0.35"/><rect x="481.44" y="38" width="0.6" height="0.7" fill="#5e5e5e"/><line x1="485.23" y1="39.4" x2="485.23" y2="49.8" stroke="#2d2d2d" stroke-width="0.35"/><rect x="483.77" y="38" width="0.6" height="0.7" fill="#5e5e5e"/><line x1="487.55" y1="39.4" x2="487.55" y2="49.8" stroke="#2d2d2d" stroke-width="0.35"/><rect x="486.09" y="38" width="0.6" height="0.7" fill="#5e5e5e"/><line x1="489.87" y1="39.4" x2="489.87" y2="49.8" stroke="#2d2d2d" stroke-width="0.35"/><rect x="488.41" y="38" width="0.6" height="0.7" fill="#5e5e5e"/><line x1="492.20" y1="39.4" x2="492.20" y2="49.8" stroke="#2d2d2d" stroke-width="0.35"/><rect x="490.73" y="38" width="0.6" height="0.7" fill="#5e5e5e"/><line x1="494.52" y1="39.4" x2="494.52" y2="49.8" stroke="#2d2d2d" stroke-width="0.35"/><rect x="493.06" y="38" width="0.6" height="0.7" fill="#5e5e5e"/><line x1="496.84" y1="39.4" x2="496.84" y2="49.8" stroke="#2d2d2d" stroke-width="0.35"/><rect x="495.38" y="38" width="0.6" height="0.7" fill="#5e5e5e"/><line x1="499.16" y1="39.4" x2="499.16" y2="49.8" stroke="#2d2d2d" stroke-width="0.35"/><rect x="497.70" y="38" width="0.6" height="0.7" fill="#5e5e5e"/><line x1="501.49" y1="39.4" x2="501.49" y2="49.8" stroke="#2d2d2d" stroke-width="0.35"/><rect x="500.03" y="38" width="0.6" height="0.7" fill="#5e5e5e"/><line x1="503.81" y1="39.4" x2="503.81" y2="49.8" stroke="#2d2d2d" stroke-width="0.35"/><rect x="502.35" y="38" width="0.6" height="0.7" fill="#5e5e5e"/><line x1="506.13" y1="39.4" x2="506.13" y2="49.8" stroke="#2d2d2d" stroke-width="0.35"/><rect x="504.67" y="38" width="0.6" height="0.7" fill="#5e5e5e"/><line x1="508.46" y1="39.4" x2="508.46" y2="49.8" stroke="#2d2d2d" stroke-width="0.35"/><rect x="506.99" y="38" width="0.6" height="0.7" fill="#5e5e5e"/><line x1="510.78" y1="39.4" x2="510.78" y2="49.8" stroke="#2d2d2d" stroke-width="0.35"/><rect x="509.32" y="38" width="0.6" height="0.7" fill="#5e5e5e"/><line x1="513.10" y1="39.4" x2="513.10" y2="49.8" stroke="#2d2d2d" stroke-width="0.35"/><rect x="511.64" y="38" width="0.6" height="0.7" fill="#5e5e5e"/><line x1="515.42" y1="39.4" x2="515.42" y2="49.8" stroke="#2d2d2d" stroke-width="0.35"/><rect x="513.96" y="38" width="0.6" height="0.7" fill="#5e5e5e"/><line x1="517.75" y1="39.4" x2="517.75" y2="49.8" stroke="#2d2d2d" stroke-width="0.35"/><rect x="516.29" y="38" width="0.6" height="0.7" fill="#5e5e5e"/><line x1="520.07" y1="39.4" x2="520.07" y2="49.8" stroke="#2d2d2d" stroke-width="0.35"/><rect x="518.61" y="38" width="0.6" height="0.7" fill="#5e5e5e"/><line x1="522.39" y1="39.4" x2="522.39" y2="49.8" stroke="#2d2d2d" stroke-width="0.35"/><rect x="520.93" y="38" width="0.6" height="0.7" fill="#5e5e5e"/><line x1="524.72" y1="39.4" x2="524.72" y2="49.8" stroke="#2d2d2d" stroke-width="0.35"/><rect x="523.26" y="38" width="0.6" height="0.7" fill="#5e5e5e"/><line x1="527.04" y1="39.4" x2="527.04" y2="49.8" stroke="#2d2d2d" stroke-width="0.35"/><rect x="525.58" y="38" width="0.6" height="0.7" fill="#5e5e5e"/><line x1="529.36" y1="39.4" x2="529.36" y2="49.8" stroke="#2d2d2d" stroke-width="0.35"/><rect x="527.90" y="38" width="0.6" height="0.7" fill="#5e5e5e"/><line x1="531.69" y1="39.4" x2="531.69" y2="49.8" stroke="#2d2d2d" stroke-width="0.35"/><rect x="530.22" y="38" width="0.6" height="0.7" fill="#5e5e5e"/><line x1="534.01" y1="39.4" x2="534.01" y2="49.8" stroke="#2d2d2d" stroke-width="0.35"/><rect x="532.55" y="38" width="0.6" height="0.7" fill="#5e5e5e"/><line x1="536.33" y1="39.4" x2="536.33" y2="49.8" stroke="#2d2d2d" stroke-width="0.35"/><rect x="534.87" y="38" width="0.6" height="0.7" fill="#5e5e5e"/><line x1="538.65" y1="39.4" x2="538.65" y2="49.8" stroke="#2d2d2d" stroke-width="0.35"/><rect x="537.19" y="38" width="0.6" height="0.7" fill="#5e5e5e"/><line x1="540.98" y1="39.4" x2="540.98" y2="49.8" stroke="#2d2d2d" stroke-width="0.35"/><rect x="539.52" y="38" width="0.6" height="0.7" fill="#5e5e5e"/><line x1="543.30" y1="39.4" x2="543.30" y2="49.8" stroke="#2d2d2d" stroke-width="0.35"/><rect x="541.84" y="38" width="0.6" height="0.7" fill="#5e5e5e"/><line x1="545.62" y1="39.4" x2="545.62" y2="49.8" stroke="#2d2d2d" stroke-width="0.35"/><rect x="544.16" y="38" width="0.6" height="0.7" fill="#5e5e5e"/><line x1="547.95" y1="39.4" x2="547.95" y2="49.8" stroke="#2d2d2d" stroke-width="0.35"/><rect x="546.48" y="38" width="0.6" height="0.7" fill="#5e5e5e"/><line x1="550.27" y1="39.4" x2="550.27" y2="49.8" stroke="#2d2d2d" stroke-width="0.35"/><rect x="548.81" y="38" width="0.6" height="0.7" fill="#5e5e5e"/><line x1="552.59" y1="39.4" x2="552.59" y2="49.8" stroke="#2d2d2d" stroke-width="0.35"/><rect x="551.13" y="38" width="0.6" height="0.7" fill="#5e5e5e"/><line x1="554.91" y1="39.4" x2="554.91" y2="49.8" stroke="#2d2d2d" stroke-width="0.35"/><rect x="553.45" y="38" width="0.6" height="0.7" fill="#5e5e5e"/><line x1="557.24" y1="39.4" x2="557.24" y2="49.8" stroke="#2d2d2d" stroke-width="0.35"/><rect x="555.78" y="38" width="0.6" height="0.7" fill="#5e5e5e"/><line x1="559.56" y1="39.4" x2="559.56" y2="49.8" stroke="#2d2d2d" stroke-width="0.35"/><rect x="558.10" y="38" width="0.6" height="0.7" fill="#5e5e5e"/><line x1="561.88" y1="39.4" x2="561.88" y2="49.8" stroke="#2d2d2d" stroke-width="0.35"/><rect x="560.42" y="38" width="0.6" height="0.7" fill="#5e5e5e"/><line x1="564.21" y1="39.4" x2="564.21" y2="49.8" stroke="#2d2d2d" stroke-width="0.35"/><rect x="562.74" y="38" width="0.6" height="0.7" fill="#5e5e5e"/><line x1="566.53" y1="39.4" x2="566.53" y2="49.8" stroke="#2d2d2d" stroke-width="0.35"/><rect x="565.07" y="38" width="0.6" height="0.7" fill="#5e5e5e"/><line x1="568.85" y1="39.4" x2="568.85" y2="49.8" stroke="#2d2d2d" stroke-width="0.35"/><rect x="567.39" y="38" width="0.6" height="0.7" fill="#5e5e5e"/><line x1="571.17" y1="39.4" x2="571.17" y2="49.8" stroke="#2d2d2d" stroke-width="0.35"/><rect x="569.71" y="38" width="0.6" height="0.7" fill="#5e5e5e"/><line x1="573.50" y1="39.4" x2="573.50" y2="49.8" stroke="#2d2d2d" stroke-width="0.35"/><rect x="572.04" y="38" width="0.6" height="0.7" fill="#5e5e5e"/><line x1="575.82" y1="39.4" x2="575.82" y2="49.8" stroke="#2d2d2d" stroke-width="0.35"/><rect x="574.36" y="38" width="0.6" height="0.7" fill="#5e5e5e"/><line x1="578.14" y1="39.4" x2="578.14" y2="49.8" stroke="#2d2d2d" stroke-width="0.35"/><rect x="576.68" y="38" width="0.6" height="0.7" fill="#5e5e5e"/><line x1="580.47" y1="39.4" x2="580.47" y2="49.8" stroke="#2d2d2d" stroke-width="0.35"/><rect x="579.01" y="38" width="0.6" height="0.7" fill="#5e5e5e"/><line x1="582.79" y1="39.4" x2="582.79" y2="49.8" stroke="#2d2d2d" stroke-width="0.35"/><rect x="581.33" y="38" width="0.6" height="0.7" fill="#5e5e5e"/><line x1="585.11" y1="39.4" x2="585.11" y2="49.8" stroke="#2d2d2d" stroke-width="0.35"/><rect x="583.65" y="38" width="0.6" height="0.7" fill="#5e5e5e"/><line x1="587.44" y1="39.4" x2="587.44" y2="49.8" stroke="#2d2d2d" stroke-width="0.35"/><rect x="585.97" y="38" width="0.6" height="0.7" fill="#5e5e5e"/><line x1="589.76" y1="39.4" x2="589.76" y2="49.8" stroke="#2d2d2d" stroke-width="0.35"/><rect x="588.30" y="38" width="0.6" height="0.7" fill="#5e5e5e"/><line x1="592.08" y1="39.4" x2="592.08" y2="49.8" stroke="#2d2d2d" stroke-width="0.35"/><rect x="590.62" y="38" width="0.6" height="0.7" fill="#5e5e5e"/><line x1="594.40" y1="39.4" x2="594.40" y2="49.8" stroke="#2d2d2d" stroke-width="0.35"/><rect x="592.94" y="38" width="0.6" height="0.7" fill="#5e5e5e"/><line x1="596.73" y1="39.4" x2="596.73" y2="49.8" stroke="#2d2d2d" stroke-width="0.35"/><rect x="595.27" y="38" width="0.6" height="0.7" fill="#5e5e5e"/><line x1="599.05" y1="39.4" x2="599.05" y2="49.8" stroke="#2d2d2d" stroke-width="0.35"/><rect x="597.59" y="38" width="0.6" height="0.7" fill="#5e5e5e"/><line x1="601.37" y1="39.4" x2="601.37" y2="49.8" stroke="#2d2d2d" stroke-width="0.35"/><rect x="599.91" y="38" width="0.6" height="0.7" fill="#5e5e5e"/><line x1="603.70" y1="39.4" x2="603.70" y2="49.8" stroke="#2d2d2d" stroke-width="0.35"/><rect x="602.23" y="38" width="0.6" height="0.7" fill="#5e5e5e"/><line x1="606.02" y1="39.4" x2="606.02" y2="49.8" stroke="#2d2d2d" stroke-width="0.35"/><rect x="604.56" y="38" width="0.6" height="0.7" fill="#5e5e5e"/><line x1="608.34" y1="39.4" x2="608.34" y2="49.8" stroke="#2d2d2d" stroke-width="0.35"/><rect x="606.88" y="38" width="0.6" height="0.7" fill="#5e5e5e"/><line x1="610.66" y1="39.4" x2="610.66" y2="49.8" stroke="#2d2d2d" stroke-width="0.35"/><rect x="609.20" y="38" width="0.6" height="0.7" fill="#5e5e5e"/><path d="M152.15 38.8 V30 H153.55 Q154.95 31.3 153.55 32.6 H152.15" fill="none" stroke="#9a9a9a" stroke-width="0.6"/><path d="M207.90 38.8 V30 H209.30 Q210.70 31.3 209.30 32.6 H207.90" fill="none" stroke="#9a9a9a" stroke-width="0.6"/><path d="M263.65 38.8 V30 H265.05 Q266.45 31.3 265.05 32.6 H263.65" fill="none" stroke="#9a9a9a" stroke-width="0.6"/><path d="M319.40 38.8 V30 H320.80 Q322.20 31.3 320.80 32.6 H319.40" fill="none" stroke="#9a9a9a" stroke-width="0.6"/><path d="M375.15 38.8 V30 H376.55 Q377.95 31.3 376.55 32.6 H375.15" fill="none" stroke="#9a9a9a" stroke-width="0.6"/><path d="M430.90 38.8 V30 H432.30 Q433.70 31.3 432.30 32.6 H430.90" fill="none" stroke="#9a9a9a" stroke-width="0.6"/><path d="M486.65 38.8 V30 H488.05 Q489.45 31.3 488.05 32.6 H486.65" fill="none" stroke="#9a9a9a" stroke-width="0.6"/><path d="M542.40 38.8 V30 H543.80 Q545.20 31.3 543.80 32.6 H542.40" fill="none" stroke="#9a9a9a" stroke-width="0.6"/><path d="M598.15 38.8 V30 H599.55 Q600.95 31.3 599.55 32.6 H598.15" fill="none" stroke="#9a9a9a" stroke-width="0.6"/>
<path d="M142.6 22.6 L139.8 24.7 L142.6 26.8 Z" fill="#c6c6c6"/>
<rect x="145.3" y="22.2" width="2.8" height="5" rx="0.6" fill="none" stroke="#c6c6c6" stroke-width="0.7"/>
<path d="M150.6 22.6 L153.4 24.7 L150.6 26.8 Z" fill="#c6c6c6"/>
<g fill="#a4a4a4">
<rect x="159" y="23" width="0.7" height="3.4"/><path d="M162.8 23 L160 24.7 L162.8 26.4 Z"/>
<path d="M167.2 23 L164.6 24.7 L167.2 26.4 Z"/><rect x="167.4" y="23" width="0.7" height="3.4"/>
<path d="M170.8 22.8 L173.8 24.7 L170.8 26.6 Z"/>
<rect x="176" y="23" width="0.7" height="3.4"/><path d="M177 23 L179.6 24.7 L177 26.4 Z"/>
<path d="M181.6 23 L184.4 24.7 L181.6 26.4 Z"/><rect x="184.5" y="23" width="0.7" height="3.4"/>
</g>
<g fill="none" stroke="#8f8f8f" stroke-width="0.7">
<path d="M190.4 24.8 H194.4 M192.8 23.4 L194.4 24.8 L192.8 26.2"/>
<rect x="196" y="24.2" width="4" height="2.2" fill="#8f8f8f" stroke="none"/><path d="M196.8 24 Q198 22.4 199.2 24"/>
<rect x="204.6" y="23.2" width="2.4" height="2.4"/><rect x="205.8" y="24.4" width="2.4" height="2.4"/>
<rect x="210.2" y="23.2" width="2.4" height="2.4"/><rect x="211.4" y="24.4" width="2.4" height="2.4"/>
<rect x="215.4" y="23.2" width="2.4" height="2.4"/><rect x="216.6" y="24.4" width="2.4" height="2.4"/>
<path d="M220.6 23 H223.4 M220.6 23 V26.6 M220.6 26.6 H223.4 M223.4 23 V23.8 M223.4 25.8 V26.6"/>
</g>
<rect x="98.2" y="38" width="1.1" height="59.8" fill="#5c2323"/>
<rect x="97.5" y="38.8" width="1.7" height="11.2" fill="#962424"/><rect x="97.9" y="40.6" width="0.9" height="1.8" fill="#e2b4b4"/><rect x="97.9" y="46" width="0.9" height="1.8" fill="#e2b4b4"/><rect x="96.8" y="31" width="2.9" height="8.6" rx="0.5" fill="#a01f1f"/></svg>
<span class="t" style="left:107.09px;top:36px;font-size:3.3px;color:#848484;">5</span>
<span class="t" style="left:118.71px;top:36px;font-size:3.3px;color:#848484;">10</span>
<span class="t" style="left:130.32px;top:36px;font-size:3.3px;color:#848484;">15</span>
<span class="t" style="left:141.94px;top:36px;font-size:3.3px;color:#848484;">20</span>
<span class="t" style="left:153.55px;top:36px;font-size:3.3px;color:#848484;">25</span>
<span class="t" style="left:165.16px;top:36px;font-size:3.3px;color:#848484;">30</span>
<span class="t" style="left:176.78px;top:36px;font-size:3.3px;color:#848484;">35</span>
<span class="t" style="left:188.39px;top:36px;font-size:3.3px;color:#848484;">40</span>
<span class="t" style="left:200.01px;top:36px;font-size:3.3px;color:#848484;">45</span>
<span class="t" style="left:211.62px;top:36px;font-size:3.3px;color:#848484;">50</span>
<span class="t" style="left:223.24px;top:36px;font-size:3.3px;color:#848484;">55</span>
<span class="t" style="left:234.85px;top:36px;font-size:3.3px;color:#848484;">60</span>
<span class="t" style="left:246.47px;top:36px;font-size:3.3px;color:#848484;">65</span>
<span class="t" style="left:258.08px;top:36px;font-size:3.3px;color:#848484;">70</span>
<span class="t" style="left:269.70px;top:36px;font-size:3.3px;color:#848484;">75</span>
<span class="t" style="left:281.31px;top:36px;font-size:3.3px;color:#848484;">80</span>
<span class="t" style="left:292.93px;top:36px;font-size:3.3px;color:#848484;">85</span>
<span class="t" style="left:304.54px;top:36px;font-size:3.3px;color:#848484;">90</span>
<span class="t" style="left:316.15px;top:36px;font-size:3.3px;color:#848484;">95</span>
<span class="t" style="left:327.77px;top:36px;font-size:3.3px;color:#848484;">100</span>
<span class="t" style="left:339.38px;top:36px;font-size:3.3px;color:#848484;">105</span>
<span class="t" style="left:351.00px;top:36px;font-size:3.3px;color:#848484;">110</span>
<span class="t" style="left:362.61px;top:36px;font-size:3.3px;color:#848484;">115</span>
<span class="t" style="left:374.23px;top:36px;font-size:3.3px;color:#848484;">120</span>
<span class="t" style="left:385.84px;top:36px;font-size:3.3px;color:#848484;">125</span>
<span class="t" style="left:397.46px;top:36px;font-size:3.3px;color:#848484;">130</span>
<span class="t" style="left:409.07px;top:36px;font-size:3.3px;color:#848484;">135</span>
<span class="t" style="left:420.69px;top:36px;font-size:3.3px;color:#848484;">140</span>
<span class="t" style="left:432.30px;top:36px;font-size:3.3px;color:#848484;">145</span>
<span class="t" style="left:443.91px;top:36px;font-size:3.3px;color:#848484;">150</span>
<span class="t" style="left:455.53px;top:36px;font-size:3.3px;color:#848484;">155</span>
<span class="t" style="left:467.14px;top:36px;font-size:3.3px;color:#848484;">160</span>
<span class="t" style="left:478.76px;top:36px;font-size:3.3px;color:#848484;">165</span>
<span class="t" style="left:490.37px;top:36px;font-size:3.3px;color:#848484;">170</span>
<span class="t" style="left:501.99px;top:36px;font-size:3.3px;color:#848484;">175</span>
<span class="t" style="left:513.60px;top:36px;font-size:3.3px;color:#848484;">180</span>
<span class="t" style="left:525.22px;top:36px;font-size:3.3px;color:#848484;">185</span>
<span class="t" style="left:536.83px;top:36px;font-size:3.3px;color:#848484;">190</span>
<span class="t" style="left:548.45px;top:36px;font-size:3.3px;color:#848484;">195</span>
<span class="t" style="left:560.06px;top:36px;font-size:3.3px;color:#848484;">200</span>
<span class="t" style="left:571.67px;top:36px;font-size:3.3px;color:#848484;">205</span>
<span class="t" style="left:583.29px;top:36px;font-size:3.3px;color:#848484;">210</span>
<span class="t" style="left:594.90px;top:36px;font-size:3.3px;color:#848484;">215</span>
<span class="t" style="left:606.52px;top:36px;font-size:3.3px;color:#848484;">220</span>
<div class="i" style="left:23.00px;top:99.40px;width:33.50px;height:6.60px;background:#353535;"></div>
<span class="t" style="left:25.20px;top:102px;font-size:3.8px;color:#8a8a8a;">&#215;</span>
<span class="t" style="left:29.70px;top:102px;font-size:3.2px;color:#ececec;font-weight:bold">fanella (Canvas)</span>
<span class="t" style="left:25.00px;top:109px;font-size:3.8px;color:#6a6a6a;">&#8592;</span>
<div class="i" style="left:33.20px;top:108.80px;width:3.60px;height:2.20px;background:#c9c9c9;border-radius:0.4px"></div>
<div class="i" style="left:33.2px;top:107.2px;width:3.6px;height:1.5px;background:repeating-linear-gradient(90deg,#c9c9c9 0,#c9c9c9 0.8px,rgba(0,0,0,0) 0.8px,rgba(0,0,0,0) 1.4px)"></div>
<span class="t" style="left:39.80px;top:109px;font-size:3.4px;color:#a8a8a8;">Scene 1</span>
<div class="i" style="left:549.50px;top:107.40px;width:4.60px;height:3.40px;background:#c4c4c4;border-radius:0.5px"></div>
<div class="i" style="left:555.20px;top:110.10px;width:0.80px;height:0.80px;background:#aaa;"></div>
<div class="i" style="left:558.8px;top:106.6px;width:0;height:0;border-left:2.9px solid transparent;border-right:2.9px solid transparent;border-bottom:4.4px solid #bdbdbd"></div>
<svg class="i" style="left:567px;top:105px" width="16" height="8" viewBox="0 0 16 8"><path d="M3.7 1.4 V6.6 M1.1 4 H6.3" stroke="#b5b5b5" stroke-width="0.8"/><circle cx="3.7" cy="4" r="1.2" fill="#b5b5b5"/><rect x="9" y="1.9" width="4.2" height="4.2" fill="none" stroke="#8f8f8f" stroke-width="0.7"/></svg>
<span class="t" style="left:585.40px;top:108px;font-size:3.7px;color:#a9a9a9;">100%</span>
<span class="t" style="left:602.40px;top:108px;font-size:4px;color:#9a9a9a;">&#8964;</span>
<div class="i" style="left:612.30px;top:23.20px;width:6.00px;height:4.40px;background:#adadad;border-radius:50%"></div>
<div class="i" style="left:614.20px;top:24.30px;width:2.20px;height:2.20px;background:#2c2c2c;border-radius:50%"></div>
<div class="i" style="left:612.50px;top:31.00px;width:5.60px;height:4.40px;background:#aaaaaa;border-radius:0.6px"></div>
<div class="i" style="left:613.70px;top:32.20px;width:2.40px;height:1.60px;background:#2c2c2c;"></div>
<div class="i" style="left:612.70px;top:42.20px;width:0.90px;height:5.60px;background:#adadad;"></div>
<div class="i" style="left:614.10px;top:43.20px;width:2.60px;height:1.40px;background:#adadad;"></div>
<div class="i" style="left:614.10px;top:45.60px;width:3.80px;height:1.60px;background:#adadad;"></div>
<div class="i" style="left:612.60px;top:50.80px;width:5.40px;height:5.40px;background:#b2b2b2;border-radius:50%"></div>
<div class="i" style="left:614.90px;top:52.90px;width:0.80px;height:2.20px;background:#2c2c2c;"></div>
<div class="i" style="left:614.90px;top:51.70px;width:0.80px;height:0.80px;background:#2c2c2c;"></div>
<div class="i" style="left:612.70px;top:59.00px;width:5.20px;height:5.20px;border:0.8px solid #aaaaaa;box-sizing:border-box;border-style:dotted"></div>
<div class="i" style="left:614.30px;top:60.60px;width:2.00px;height:2.00px;background:#bdbdbd;"></div>
<div class="i" style="left:614.00px;top:70.60px;width:2.60px;height:2.00px;background:#aaaaaa;"></div>
<div class="i" style="left:612.30px;top:74.40px;width:2.40px;height:2.00px;background:#aaaaaa;"></div>
<div class="i" style="left:615.90px;top:74.40px;width:2.40px;height:2.00px;background:#aaaaaa;"></div>
<div class="i" style="left:613.30px;top:73.00px;width:4.00px;height:0.60px;background:#aaaaaa;"></div>
<div class="i" style="left:612.30px;top:82.30px;width:2.20px;height:2.20px;background:#b2b2b2;border-radius:50%"></div>
<div class="i" style="left:616.10px;top:78.50px;width:2.20px;height:2.20px;background:#b2b2b2;border-radius:50%"></div>
<div class="i" style="left:614.85px;top:79.00px;width:0.9px;height:5px;background:#b2b2b2;transform:rotate(45deg);border-radius:0.45px;"></div>
<div class="i" style="left:621.50px;top:15.60px;width:87.50px;height:1.00px;background:#262626;"></div>
<div class="i" style="left:621.50px;top:16.60px;width:87.50px;height:6.80px;background:#2d2d2d;"></div>
<div class="i" style="left:621.50px;top:16.60px;width:19.50px;height:6.80px;background:#333;"></div>
<span class="t" style="left:623.20px;top:20px;font-size:3.25px;color:#dedede;font-weight:bold">Properties</span>
<span class="t" style="left:642.20px;top:20px;font-size:3.55px;color:#9a9a9a;">Library</span>
<div class="i" style="left:703.80px;top:19.60px;width:2.80px;height:0.50px;background:#999;"></div>
<div class="i" style="left:703.80px;top:20.60px;width:2.80px;height:0.50px;background:#999;"></div>
<div class="i" style="left:703.80px;top:21.60px;width:2.80px;height:0.50px;background:#999;"></div>
<div class="i" style="left:704.60px;top:16.20px;width:1.60px;height:0.50px;background:#888;"></div>
<div class="i" style="left:629.00px;top:29.40px;width:6.20px;height:6.00px;border:0.6px solid #a4a4a4;box-sizing:border-box;border-radius:0.6px"></div>
<div class="i" style="left:630.60px;top:31.40px;width:1.40px;height:2.20px;background:#bebebe;"></div>
<div class="i" style="left:632.40px;top:32.00px;width:1.20px;height:1.60px;background:#c0c0c0;"></div>
<span class="t" style="left:642.20px;top:28px;font-size:3.38px;color:#b2b2b2;">HTML5 Canvas Document</span>
<span class="t" style="left:642.20px;top:36px;font-size:3.8px;color:#a8a8a8;">fanella</span>
<div class="i" style="left:623px;top:43.8px;width:0;height:0;border-left:1.5px solid transparent;border-right:1.5px solid transparent;border-top:2px solid #b6b6b6"></div>
<span class="t" style="left:627.10px;top:44px;font-size:3.2px;color:#9c9c9c;">Publish</span>
<span class="t" style="left:630.30px;top:52px;font-size:3.25px;color:#8e8e8e;">Profile:</span>
<span class="t" style="left:642.20px;top:52px;font-size:3.7px;color:#b2b2b2;">Default</span>
<div class="i" style="left:642.20px;top:55.30px;width:35.40px;height:5.50px;border:0.6px solid #5c5c5c;box-sizing:border-box;border-radius:0.6px"></div>
<span class="t" style="left:644.80px;top:57px;font-size:3.5px;color:#bababa;">Publish Settings...</span>
<span class="t" style="left:632.40px;top:66px;font-size:3.3px;color:#5e5e5e;">Target:</span>
<div class="i" style="left:642.40px;top:64.10px;width:45.60px;height:5.40px;background:#3c3c3c;border-radius:0.6px"></div>
<span class="t" style="left:633.40px;top:74px;font-size:3.3px;color:#5e5e5e;">Script:</span>
<div class="i" style="left:642.40px;top:72.50px;width:45.60px;height:5.40px;background:#3c3c3c;border-radius:0.6px"></div>
<span class="t" style="left:633.60px;top:84px;font-size:3.3px;color:#5e5e5e;">Other:</span>
<div class="i" style="left:642.40px;top:81.70px;width:45.60px;height:5.40px;background:#3c3c3c;border-radius:0.6px"></div>
<span class="t" style="left:690.80px;top:74px;font-size:4.6px;color:#6a6a6a;">A</span>
<div class="i" style="left:691.60px;top:82.10px;width:0.8px;height:4.6px;background:#5e5e5e;transform:rotate(40deg);border-radius:0.4px;"></div>
<div class="i" style="left:623px;top:95.4px;width:0;height:0;border-left:1.5px solid transparent;border-right:1.5px solid transparent;border-top:2px solid #b6b6b6"></div>
<span class="t" style="left:627.50px;top:96px;font-size:3.35px;color:#9c9c9c;">Properties</span>
<span class="t" style="left:635.00px;top:103px;font-size:3.1px;color:#8e8e8e;">FPS:</span>
<span class="t" style="left:643.10px;top:103px;font-size:3.6px;color:#bebebe;text-decoration:underline">24.00</span>
<div class="i" style="left:642.60px;top:109.90px;width:3.60px;height:3.60px;border:0.6px solid #8c8c8c;box-sizing:border-box;border-radius:0.4px;background:#2c2c2c"></div>
<span class="t" style="left:648.00px;top:111px;font-size:3.2px;color:#b6b6b6;">Scale Frame Spans</span>
<span class="t" style="left:634.00px;top:120px;font-size:3.1px;color:#8e8e8e;">Size:</span>
<span class="t" style="left:643.60px;top:120px;font-size:3.2px;color:#8e8e8e;">W:</span>
<span class="t" style="left:649.60px;top:120px;font-size:3.45px;color:#bebebe;text-decoration:underline">1280</span>
<div class="i" style="left:663.20px;top:118.80px;width:4.00px;height:4.00px;border:0.9px solid #b2b2b2;box-sizing:border-box;border-radius:50%"></div>
<span class="t" style="left:672.80px;top:120px;font-size:3.2px;color:#8e8e8e;">H:</span>
<span class="t" style="left:680.00px;top:120px;font-size:3.6px;color:#bebebe;text-decoration:underline">720</span>
<span class="t" style="left:697.00px;top:120px;font-size:3.3px;color:#6e6e6e;">px</span>
<div class="i" style="left:642.60px;top:127.20px;width:3.60px;height:3.60px;border:0.6px solid #8c8c8c;box-sizing:border-box;border-radius:0.4px;background:#2c2c2c"></div>
<span class="t" style="left:648.00px;top:128px;font-size:3.4px;color:#b6b6b6;">Scale Content</span>
<div class="i" style="left:642.40px;top:134.60px;width:45.80px;height:5.40px;border:0.6px solid #5c5c5c;box-sizing:border-box;border-radius:0.6px"></div>
<span class="t" style="left:651.80px;top:137px;font-size:3.1px;color:#bababa;">Advanced Settings...</span>
<div class="i" style="left:625.50px;top:143.40px;width:82.00px;height:0.50px;background:#444;"></div>
<span class="t" style="left:631.60px;top:147px;font-size:3.3px;color:#8e8e8e;">Stage:</span>
<div class="i" style="left:644.40px;top:145.20px;width:7.60px;height:4.50px;background:#fff;border-radius:0.4px"></div>
<div class="i" style="left:643.40px;top:152.50px;width:3.60px;height:3.60px;border:0.6px solid #8c8c8c;box-sizing:border-box;border-radius:0.4px;background:#2c2c2c"></div>
<span class="t" style="left:648.40px;top:154px;font-size:3.5px;color:#b6b6b6;">Apply to pasteboard</span>
<svg class="i" style="left:0;top:0" width="712" height="417" viewBox="0 0 712 417">
<rect x="111" y="129.8" width="375" height="186.4" fill="#28c9fc"/>
<rect x="111.3" y="130.1" width="374.4" height="186" fill="none" stroke="#6ad9ff" stroke-width="0.7"/>
<rect x="107.2" y="316" width="380.8" height="27.5" fill="#fdf8d0"/>
<path d="M111.8 316 V341.2 H483.7 V316" fill="none" stroke="#b9b28a" stroke-width="0.7"/>
<g id="girl">
<path d="M300.2 145.6 C318.3 145.6 333.0 160.1 333.0 178.0 C333.6 186 336.4 194 339.4 201.6 C343 211 338 217.5 330 217.8 C322 218 315 214 313.4 208 L313 190 L287 190 L284.8 208 C283 214 278 218 271 217.8 C263 217.5 258 211 261.4 201.6 C264.2 194 266.6 186 267.4 178.0 C267.4 160.1 282.1 145.6 300.2 145.6 Z" fill="#363535"/>
<ellipse cx="277.2" cy="180.4" rx="3.2" ry="4.4" fill="#fdf6d2"/>
<ellipse cx="323.2" cy="180.4" rx="3.2" ry="4.4" fill="#fdf6d2"/>
<rect x="296.6" y="203" width="7.4" height="9" fill="#fdf6d2"/>
<circle cx="300" cy="183" r="22.6" fill="#fdf6d2"/>
<path d="M276 158 H324 V171.8 H322.6 Q300 168.8 277.4 171.8 H276 Z" fill="#363535"/>
<path d="M277.4 175 L286.6 175.3 M313.8 175.3 L322.6 175" stroke="#861515" stroke-width="2.2" fill="none"/>
<path d="M286.5 176.2 C286.5 171.8 298 171.8 298 176.2 C298 180 296 182.4 292.2 182.4 C288.4 182.4 286.5 180 286.5 176.2 Z" fill="#fdf6d2" stroke="#861515" stroke-width="1.1"/>
<path d="M302.6 176.2 C302.6 171.8 314.1 171.8 314.1 176.2 C314.1 180 312.1 182.4 308.4 182.4 C304.6 182.4 302.6 180 302.6 176.2 Z" fill="#fdf6d2" stroke="#861515" stroke-width="1.1"/>
<path d="M286.3 175.8 C287.4 172 297 172 298.2 175.8 M302.4 175.8 C303.6 172 313.2 172 314.3 175.8" stroke="#861515" stroke-width="1.9" fill="none"/>
<path d="M297.8 175.6 Q300.3 174.2 302.8 175.6" stroke="#861515" stroke-width="1.6" fill="none"/>
<circle cx="292.1" cy="176.8" r="3.1" fill="#121212"/>
<circle cx="308.3" cy="176.8" r="3.1" fill="#121212"/>
<circle cx="291" cy="175.6" r="0.75" fill="#fff"/>
<circle cx="307.2" cy="175.6" r="0.75" fill="#fff"/>
<rect x="285.4" y="184.8" width="29.4" height="5" rx="0.8" fill="#fffffa"/>
<path d="M285.6 189.4 H314.8 Q315.6 189.4 315.4 190.4 C314.4 198.8 308 202.9 300.2 202.9 C292.4 202.9 286 198.8 285 190.4 Q284.8 189.4 285.6 189.4 Z" fill="#9a0913"/>
<path d="M290.8 199.6 C293 195.2 308 195.2 310.2 199.6 C307.6 202.1 304.2 202.9 300.2 202.9 C296.4 202.9 293.4 202.1 290.8 199.6 Z" fill="#d070d4"/>
<rect x="288.1" y="268" width="12.3" height="44" fill="#080808"/><rect x="301.5" y="268" width="12.4" height="44" fill="#080808"/>
<path d="M277.2 320.6 C277.6 313.5 283 309 290 309 C296.5 309 300 313.5 300.3 320.6 Z" fill="#2f2f2f"/>
<path d="M301.6 320.6 C302 313.5 305.5 309 312 309 C319 309 324.8 313.5 325.2 320.6 Z" fill="#2f2f2f"/>
<rect x="276.8" y="319" width="23.6" height="3" rx="1.2" fill="#050505"/>
<rect x="301.5" y="319" width="24" height="3" rx="1.2" fill="#050505"/>
<path d="M274.4 233 C274.4 225.5 277.2 220 282.4 218.6 C285.4 218 287.6 219.6 287.6 222.4 V270 H274.4 Z" fill="#3d46f4"/>
<path d="M326 234 C326 226.5 323.4 220.6 318.4 219.2 C315.4 218.6 313.2 220.2 313.2 223 V270 H326 Z" fill="#3d46f4"/>
<circle cx="280" cy="273.3" r="4.5" fill="#fdf6d2"/>
<circle cx="321.8" cy="273.3" r="4.5" fill="#fdf6d2"/>
<path d="M282.6 226 C283 216 291 211.2 300.4 211.2 C310 211.2 317.4 216 317.8 226 L319 262 C319 272 312 277 300.5 277 C289 277 281.4 272 281.4 262 Z" fill="#3d46f4"/>
<rect x="300.2" y="211.2" width="1.3" height="65.8" fill="#f0e8c0"/>
<rect x="285.8" y="223.2" width="11.2" height="6.6" fill="#ffffff"/>
</g>
<polyline points="34.6,194.4 20.2,209 34.6,223.6" fill="none" stroke="#7f7f7f" stroke-width="4" stroke-linecap="round" stroke-linejoin="round"/>
<polyline points="695.3,192.7 711.6,209 695.3,225.3" fill="none" stroke="#cdcdcd" stroke-width="4" stroke-linecap="round" stroke-linejoin="round"/>
</svg>
<div id="cap" class="t"><b>in</b> Timeline Photos</div>
</div>
</body>
</html>
